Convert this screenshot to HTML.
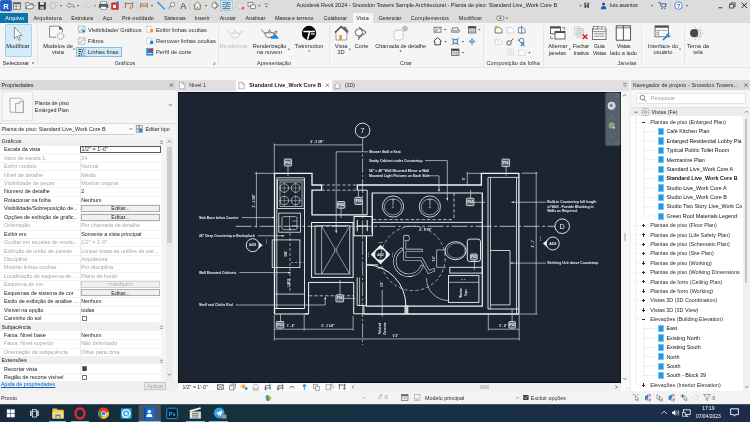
<!DOCTYPE html>
<html><head><meta charset="utf-8"><title>Autodesk Revit 2024</title>
<style>
html,body{margin:0;padding:0;}
body{width:750px;height:422px;overflow:hidden;position:relative;background:#f0f0f0;font-family:"Liberation Sans",sans-serif;}
.t{position:absolute;white-space:nowrap;}
#root{position:absolute;left:0;top:0;width:750px;height:422px;will-change:transform;}
.r{position:absolute;}
svg{position:absolute;overflow:visible;}
</style></head><body><div id="root">

<div class="r" style="left:0px;top:0px;width:750px;height:23px;background:#dcdcdc;"></div>
<div class="r" style="left:0px;top:23px;width:750px;height:45px;background:#f5f5f5;"></div>
<div class="r" style="left:0px;top:66.8px;width:750px;height:0.8px;background:#e6e6e6;"></div>
<div class="r" style="left:0px;top:67.6px;width:750px;height:12.4px;background:#f6f6f6;"></div>
<div class="t" style="left:296.5px;top:1.80px;font-size:5.5px;line-height:6.60px;color:#222;">Autodesk Revit 2024 - Snowdon Towers Sample Architectural - Planta de piso: Standard Live_Work Core B</div>
<div class="t" style="left:610px;top:1.92px;font-size:5.3px;line-height:6.36px;color:#222;">luis.asantos</div>
<div class="r" style="left:0px;top:13px;width:28px;height:10px;background:#0a75a8;"></div>
<div class="t" style="left:5.3px;top:15.16px;font-size:5.4px;line-height:6.48px;color:#fff;letter-spacing:0.056px;">Arquivo</div>
<div class="r" style="left:353.2px;top:13px;width:19.8px;height:10px;background:#f5f5f5;"></div>
<div class="t" style="left:33.6px;top:15.16px;font-size:5.4px;line-height:6.48px;color:#222;letter-spacing:0.171px;">Arquitetura</div>
<div class="t" style="left:71.3px;top:15.16px;font-size:5.4px;line-height:6.48px;color:#222;letter-spacing:-0.012px;">Estrutura</div>
<div class="t" style="left:102.7px;top:15.16px;font-size:5.4px;line-height:6.48px;color:#222;letter-spacing:0.098px;">Aço</div>
<div class="t" style="left:121.9px;top:15.16px;font-size:5.4px;line-height:6.48px;color:#222;letter-spacing:0.108px;">Pré-moldado</div>
<div class="t" style="left:163.9px;top:15.16px;font-size:5.4px;line-height:6.48px;color:#222;letter-spacing:-0.063px;">Sistemas</div>
<div class="t" style="left:194.7px;top:15.16px;font-size:5.4px;line-height:6.48px;color:#222;letter-spacing:0.042px;">Inserir</div>
<div class="t" style="left:219.7px;top:15.16px;font-size:5.4px;line-height:6.48px;color:#222;letter-spacing:0.065px;">Anotar</div>
<div class="t" style="left:245.6px;top:15.16px;font-size:5.4px;line-height:6.48px;color:#222;letter-spacing:0.024px;">Analisar</div>
<div class="t" style="left:274.9px;top:15.16px;font-size:5.4px;line-height:6.48px;color:#222;letter-spacing:-0.028px;">Massa e terreno</div>
<div class="t" style="left:323.6px;top:15.16px;font-size:5.4px;line-height:6.48px;color:#222;letter-spacing:-0.024px;">Colaborar</div>
<div class="t" style="left:356.3px;top:15.16px;font-size:5.4px;line-height:6.48px;color:#222;letter-spacing:0.118px;">Vista</div>
<div class="t" style="left:378.4px;top:15.16px;font-size:5.4px;line-height:6.48px;color:#222;letter-spacing:-0.101px;">Gerenciar</div>
<div class="t" style="left:410.8px;top:15.16px;font-size:5.4px;line-height:6.48px;color:#222;letter-spacing:0.174px;">Complementos</div>
<div class="t" style="left:458.8px;top:15.16px;font-size:5.4px;line-height:6.48px;color:#222;letter-spacing:0.177px;">Modificar</div>
<div class="r" style="left:5px;top:24px;width:27px;height:33.2px;background:#d4ebf8;border:0.6px solid #a3d5ee;box-sizing:border-box;border-radius:1px;"></div>
<div class="t" style="left:-32px;width:100px;text-align:center;top:42.55px;font-size:5.75px;line-height:6.90px;color:#222;">Modificar</div>
<div class="t" style="left:2.8px;top:59.54px;font-size:5.6px;line-height:6.72px;color:#222;">Selecionar</div>
<div class="r" style="left:37px;top:25px;width:0.6px;height:41px;background:#e6e6e6;"></div>
<div class="r" style="left:218px;top:25px;width:0.6px;height:41px;background:#e6e6e6;"></div>
<div class="r" style="left:328.8px;top:25px;width:0.6px;height:41px;background:#e6e6e6;"></div>
<div class="r" style="left:483.4px;top:25px;width:0.6px;height:41px;background:#e6e6e6;"></div>
<div class="r" style="left:542.6px;top:25px;width:0.6px;height:41px;background:#e6e6e6;"></div>
<div class="r" style="left:641.2px;top:25px;width:0.6px;height:41px;background:#e6e6e6;"></div>
<div class="r" style="left:684px;top:25px;width:0.6px;height:41px;background:#e6e6e6;"></div>
<div class="t" style="left:8px;width:100px;text-align:center;top:42.55px;font-size:5.75px;line-height:6.90px;color:#222;">Modelos de</div>
<div class="t" style="left:8px;width:100px;text-align:center;top:49.45px;font-size:5.75px;line-height:6.90px;color:#222;">vista</div>
<div class="t" style="left:88px;top:26.55px;font-size:5.75px;line-height:6.90px;color:#2c2c2c;">Visibilidade/ Gráficos</div>
<div class="t" style="left:88px;top:37.55px;font-size:5.75px;line-height:6.90px;color:#2c2c2c;">Filtros</div>
<div class="r" style="left:76px;top:47px;width:46px;height:10px;background:#d3eaf7;border:0.5px solid #7fc0e0;box-sizing:border-box;"></div>
<div class="t" style="left:88px;top:48.55px;font-size:5.75px;line-height:6.90px;color:#2c2c2c;">Linhas finas</div>
<div class="t" style="left:156px;top:26.55px;font-size:5.75px;line-height:6.90px;color:#2c2c2c;">Exibir linhas ocultas</div>
<div class="t" style="left:156px;top:37.55px;font-size:5.75px;line-height:6.90px;color:#2c2c2c;">Remover linhas ocultas</div>
<div class="t" style="left:156px;top:48.55px;font-size:5.75px;line-height:6.90px;color:#2c2c2c;">Perfil de corte</div>
<div class="t" style="left:75px;width:100px;text-align:center;top:59.60px;font-size:5.5px;line-height:6.60px;color:#333;">Gráficos</div>
<div class="t" style="left:183.5px;width:100px;text-align:center;top:42.55px;font-size:5.75px;line-height:6.90px;color:#bbb;">Renderizar</div>
<div class="t" style="left:219.5px;width:100px;text-align:center;top:42.64px;font-size:5.6px;line-height:6.72px;color:#2c2c2c;letter-spacing:-0.096px;">Renderização</div>
<div class="t" style="left:219.5px;width:100px;text-align:center;top:49.45px;font-size:5.75px;line-height:6.90px;color:#2c2c2c;">na nuvem</div>
<div class="t" style="left:259px;width:100px;text-align:center;top:42.55px;font-size:5.75px;line-height:6.90px;color:#2c2c2c;">Twinmotion</div>
<div class="t" style="left:224px;width:100px;text-align:center;top:59.60px;font-size:5.5px;line-height:6.60px;color:#333;">Apresentação</div>
<div class="t" style="left:291px;width:100px;text-align:center;top:42.55px;font-size:5.75px;line-height:6.90px;color:#2c2c2c;">Vista</div>
<div class="t" style="left:291px;width:100px;text-align:center;top:49.45px;font-size:5.75px;line-height:6.90px;color:#2c2c2c;">3D</div>
<div class="t" style="left:311.5px;width:100px;text-align:center;top:42.55px;font-size:5.75px;line-height:6.90px;color:#2c2c2c;">Corte</div>
<div class="t" style="left:350.6px;width:100px;text-align:center;top:42.64px;font-size:5.6px;line-height:6.72px;color:#2c2c2c;letter-spacing:-0.066px;">Chamada de detalhe</div>
<div class="t" style="left:356px;width:100px;text-align:center;top:59.60px;font-size:5.5px;line-height:6.60px;color:#333;">Criar</div>
<div class="t" style="left:463.20000000000005px;width:100px;text-align:center;top:59.60px;font-size:5.5px;line-height:6.60px;color:#333;letter-spacing:0.086px;">Composição da folha</div>
<div class="t" style="left:507.9px;width:100px;text-align:center;top:42.64px;font-size:5.6px;line-height:6.72px;color:#2c2c2c;letter-spacing:-0.051px;">Alternar</div>
<div class="t" style="left:507.4px;width:100px;text-align:center;top:49.54px;font-size:5.6px;line-height:6.72px;color:#2c2c2c;letter-spacing:-0.092px;">janelas</div>
<div class="t" style="left:531px;width:100px;text-align:center;top:42.70px;font-size:5.5px;line-height:6.60px;color:#2c2c2c;letter-spacing:-0.220px;">Fechar</div>
<div class="t" style="left:531.1px;width:100px;text-align:center;top:49.60px;font-size:5.5px;line-height:6.60px;color:#2c2c2c;letter-spacing:-0.172px;">Inativa</div>
<div class="t" style="left:549.2px;width:100px;text-align:center;top:42.70px;font-size:5.5px;line-height:6.60px;color:#2c2c2c;letter-spacing:-0.204px;">Guia</div>
<div class="t" style="left:549.4px;width:100px;text-align:center;top:49.60px;font-size:5.5px;line-height:6.60px;color:#2c2c2c;letter-spacing:-0.246px;">Vistas</div>
<div class="t" style="left:573.6px;width:100px;text-align:center;top:42.70px;font-size:5.5px;line-height:6.60px;color:#2c2c2c;letter-spacing:-0.213px;">Vistas</div>
<div class="t" style="left:573.4px;width:100px;text-align:center;top:49.54px;font-size:5.6px;line-height:6.72px;color:#2c2c2c;letter-spacing:-0.055px;">lado a lado</div>
<div class="t" style="left:577px;width:100px;text-align:center;top:59.60px;font-size:5.5px;line-height:6.60px;color:#333;">Janelas</div>
<div class="t" style="left:613px;width:100px;text-align:center;top:42.55px;font-size:5.75px;line-height:6.90px;color:#2c2c2c;">Interface do</div>
<div class="t" style="left:613px;width:100px;text-align:center;top:49.45px;font-size:5.75px;line-height:6.90px;color:#2c2c2c;">usuário</div>
<div class="t" style="left:648px;width:100px;text-align:center;top:42.55px;font-size:5.75px;line-height:6.90px;color:#2c2c2c;">Tema da</div>
<div class="t" style="left:648px;width:100px;text-align:center;top:49.45px;font-size:5.75px;line-height:6.90px;color:#2c2c2c;">tela</div>
<div class="r" style="left:0px;top:80px;width:175.6px;height:311px;background:#ffffff;"></div>
<div class="r" style="left:0px;top:80px;width:175.6px;height:10px;background:#d9d9d9;"></div>
<div class="t" style="left:1.5px;top:82.06px;font-size:5.4px;line-height:6.48px;color:#222;">Propriedades</div>
<div class="r" style="left:0px;top:90px;width:175.6px;height:47.6px;background:#f4f4f4;"></div>
<div class="r" style="left:1.5px;top:90.6px;width:31.2px;height:30.6px;background:#f7f7f7;border:0.5px solid #e4e4e4;box-sizing:border-box;"></div>
<div class="t" style="left:34.8px;top:99.56px;font-size:5.4px;line-height:6.48px;color:#2c2c2c;">Planta de piso</div>
<div class="t" style="left:34.8px;top:106.96px;font-size:5.4px;line-height:6.48px;color:#2c2c2c;">Enlarged Plan</div>
<div class="r" style="left:0px;top:123px;width:175.6px;height:0.5px;background:#dcdcdc;"></div>
<div class="r" style="left:0.5px;top:124.4px;width:133px;height:9.8px;background:#fbfbfb;border-bottom:0.6px solid #cfcfcf;"></div>
<div class="t" style="left:1.5px;top:126.16px;font-size:5.4px;line-height:6.48px;color:#2c2c2c;">Planta de piso: Standard Live_Work Core B</div>
<div class="t" style="left:145.4px;top:126.16px;font-size:5.4px;line-height:6.48px;color:#2c2c2c;">Editar tipo</div>
<div class="r" style="left:0px;top:137.6px;width:165px;height:8px;background:#f0f0f0;"></div>
<div class="t" style="left:1.5px;top:138.36px;font-size:5.4px;line-height:6.48px;color:#2c2c2c;">Gráficos</div>
<div class="r" style="left:0px;top:153.6px;width:160px;height:0.4px;background:#f3f3f3;"></div>
<div class="t" style="left:4px;top:146.26px;font-size:5.4px;line-height:6.48px;color:#222;">Escala da vista</div>
<div class="t" style="left:81.2px;top:146.26px;font-size:5.4px;line-height:6.48px;color:#222;">1/2&quot; = 1&#x27;-0&quot;</div>
<div class="r" style="left:0px;top:162.04px;width:160px;height:0.4px;background:#f3f3f3;"></div>
<div class="t" style="left:4px;top:154.70px;font-size:5.4px;line-height:6.48px;color:#a6a6a6;">Valor de escala   1:</div>
<div class="t" style="left:81.2px;top:154.70px;font-size:5.4px;line-height:6.48px;color:#a6a6a6;">24</div>
<div class="r" style="left:0px;top:170.48px;width:160px;height:0.4px;background:#f3f3f3;"></div>
<div class="t" style="left:4px;top:163.14px;font-size:5.4px;line-height:6.48px;color:#a6a6a6;">Exibir modelo</div>
<div class="t" style="left:81.2px;top:163.14px;font-size:5.4px;line-height:6.48px;color:#a6a6a6;">Normal</div>
<div class="r" style="left:0px;top:178.92px;width:160px;height:0.4px;background:#f3f3f3;"></div>
<div class="t" style="left:4px;top:171.58px;font-size:5.4px;line-height:6.48px;color:#a6a6a6;">Nível de detalhe</div>
<div class="t" style="left:81.2px;top:171.58px;font-size:5.4px;line-height:6.48px;color:#a6a6a6;">Médio</div>
<div class="r" style="left:0px;top:187.35999999999999px;width:160px;height:0.4px;background:#f3f3f3;"></div>
<div class="t" style="left:4px;top:180.02px;font-size:5.4px;line-height:6.48px;color:#a6a6a6;">Visibilidade de peças</div>
<div class="t" style="left:81.2px;top:180.02px;font-size:5.4px;line-height:6.48px;color:#a6a6a6;">Mostrar original</div>
<div class="r" style="left:0px;top:195.79999999999998px;width:160px;height:0.4px;background:#f3f3f3;"></div>
<div class="t" style="left:4px;top:188.46px;font-size:5.4px;line-height:6.48px;color:#222;">Número de detalhe</div>
<div class="t" style="left:81.2px;top:188.46px;font-size:5.4px;line-height:6.48px;color:#222;">2</div>
<div class="r" style="left:0px;top:204.23999999999998px;width:160px;height:0.4px;background:#f3f3f3;"></div>
<div class="t" style="left:4px;top:196.90px;font-size:5.4px;line-height:6.48px;color:#222;">Rotacionar na folha</div>
<div class="t" style="left:81.2px;top:196.90px;font-size:5.4px;line-height:6.48px;color:#222;">Nenhum</div>
<div class="r" style="left:0px;top:212.67999999999998px;width:160px;height:0.4px;background:#f3f3f3;"></div>
<div class="t" style="left:4px;top:205.34px;font-size:5.4px;line-height:6.48px;color:#222;">Visibilidade/Sobreposição de...</div>
<div class="r" style="left:81px;top:205.07999999999998px;width:79px;height:7.0px;background:#f0f0f0;border:0.5px solid #adadad;box-sizing:border-box;"></div>
<div class="t" style="left:70.5px;width:100px;text-align:center;top:205.34px;font-size:5.4px;line-height:6.48px;color:#222;">Editar...</div>
<div class="r" style="left:0px;top:221.11999999999998px;width:160px;height:0.4px;background:#f3f3f3;"></div>
<div class="t" style="left:4px;top:213.78px;font-size:5.4px;line-height:6.48px;color:#222;">Opções de exibição de gráfic...</div>
<div class="r" style="left:81px;top:213.51999999999998px;width:79px;height:7.0px;background:#f0f0f0;border:0.5px solid #adadad;box-sizing:border-box;"></div>
<div class="t" style="left:70.5px;width:100px;text-align:center;top:213.78px;font-size:5.4px;line-height:6.48px;color:#222;">Editar...</div>
<div class="r" style="left:0px;top:229.55999999999997px;width:160px;height:0.4px;background:#f3f3f3;"></div>
<div class="t" style="left:4px;top:222.22px;font-size:5.4px;line-height:6.48px;color:#a6a6a6;">Orientação</div>
<div class="t" style="left:81.2px;top:222.22px;font-size:5.4px;line-height:6.48px;color:#a6a6a6;">Por chamada de detalhe</div>
<div class="r" style="left:0px;top:237.99999999999997px;width:160px;height:0.4px;background:#f3f3f3;"></div>
<div class="t" style="left:4px;top:230.66px;font-size:5.4px;line-height:6.48px;color:#222;">Exibir em</div>
<div class="t" style="left:81.2px;top:230.66px;font-size:5.4px;line-height:6.48px;color:#222;">Somente a vista principal</div>
<div class="r" style="left:0px;top:246.43999999999997px;width:160px;height:0.4px;background:#f3f3f3;"></div>
<div class="t" style="left:4px;top:239.10px;font-size:5.4px;line-height:6.48px;color:#a6a6a6;">Ocultar em escalas de resolu...</div>
<div class="t" style="left:81.2px;top:239.10px;font-size:5.4px;line-height:6.48px;color:#a6a6a6;">1/2&quot; = 1&#x27;-0&quot;</div>
<div class="r" style="left:0px;top:254.88px;width:160px;height:0.4px;background:#f3f3f3;"></div>
<div class="t" style="left:4px;top:247.54px;font-size:5.4px;line-height:6.48px;color:#a6a6a6;">Exibição de união de parede</div>
<div class="t" style="left:81.2px;top:247.54px;font-size:5.4px;line-height:6.48px;color:#a6a6a6;">Limpar todas as uniões de par...</div>
<div class="r" style="left:0px;top:263.32000000000005px;width:160px;height:0.4px;background:#f3f3f3;"></div>
<div class="t" style="left:4px;top:255.98px;font-size:5.4px;line-height:6.48px;color:#a6a6a6;">Disciplina</div>
<div class="t" style="left:81.2px;top:255.98px;font-size:5.4px;line-height:6.48px;color:#a6a6a6;">Arquitetura</div>
<div class="r" style="left:0px;top:271.76px;width:160px;height:0.4px;background:#f3f3f3;"></div>
<div class="t" style="left:4px;top:264.42px;font-size:5.4px;line-height:6.48px;color:#a6a6a6;">Mostrar linhas ocultas</div>
<div class="t" style="left:81.2px;top:264.42px;font-size:5.4px;line-height:6.48px;color:#a6a6a6;">Por disciplina</div>
<div class="r" style="left:0px;top:280.20000000000005px;width:160px;height:0.4px;background:#f3f3f3;"></div>
<div class="t" style="left:4px;top:272.86px;font-size:5.4px;line-height:6.48px;color:#a6a6a6;">Localização do esquema de ...</div>
<div class="t" style="left:81.2px;top:272.86px;font-size:5.4px;line-height:6.48px;color:#a6a6a6;">Plano de fundo</div>
<div class="r" style="left:0px;top:288.64px;width:160px;height:0.4px;background:#f3f3f3;"></div>
<div class="t" style="left:4px;top:281.30px;font-size:5.4px;line-height:6.48px;color:#a6a6a6;">Esquema de cor</div>
<div class="r" style="left:81px;top:281.03999999999996px;width:79px;height:7.0px;background:#f0f0f0;border:0.5px solid #d0d0d0;box-sizing:border-box;"></div>
<div class="t" style="left:70.5px;width:100px;text-align:center;top:281.30px;font-size:5.4px;line-height:6.48px;color:#a6a6a6;">&lt;nenhum&gt;</div>
<div class="r" style="left:0px;top:297.08000000000004px;width:160px;height:0.4px;background:#f3f3f3;"></div>
<div class="t" style="left:4px;top:289.74px;font-size:5.4px;line-height:6.48px;color:#222;">Esquemas de sistema de cor</div>
<div class="r" style="left:81px;top:289.48px;width:79px;height:7.0px;background:#f0f0f0;border:0.5px solid #adadad;box-sizing:border-box;"></div>
<div class="t" style="left:70.5px;width:100px;text-align:center;top:289.74px;font-size:5.4px;line-height:6.48px;color:#222;">Editar...</div>
<div class="r" style="left:0px;top:305.52px;width:160px;height:0.4px;background:#f3f3f3;"></div>
<div class="t" style="left:4px;top:298.18px;font-size:5.4px;line-height:6.48px;color:#222;">Estilo de exibição de análise ...</div>
<div class="t" style="left:81.2px;top:298.18px;font-size:5.4px;line-height:6.48px;color:#222;">Nenhum</div>
<div class="r" style="left:0px;top:313.96000000000004px;width:160px;height:0.4px;background:#f3f3f3;"></div>
<div class="t" style="left:4px;top:306.62px;font-size:5.4px;line-height:6.48px;color:#222;">Visível na opção</div>
<div class="t" style="left:81.2px;top:306.62px;font-size:5.4px;line-height:6.48px;color:#222;">todas</div>
<div class="r" style="left:0px;top:322.4px;width:160px;height:0.4px;background:#f3f3f3;"></div>
<div class="t" style="left:4px;top:315.06px;font-size:5.4px;line-height:6.48px;color:#222;">Caminho do sol</div>
<div class="r" style="left:82px;top:315.79999999999995px;width:4.8px;height:4.8px;background:#fff;border:0.5px solid #777;box-sizing:border-box;"></div>
<div class="r" style="left:0px;top:322.54px;width:165px;height:8.2px;background:#f0f0f0;"></div>
<div class="t" style="left:1.5px;top:323.50px;font-size:5.4px;line-height:6.48px;color:#222;">Subjacência</div>
<div class="r" style="left:0px;top:339.28px;width:160px;height:0.4px;background:#f3f3f3;"></div>
<div class="t" style="left:4px;top:331.94px;font-size:5.4px;line-height:6.48px;color:#222;">Faixa: Nível base</div>
<div class="t" style="left:81.2px;top:331.94px;font-size:5.4px;line-height:6.48px;color:#222;">Nenhum</div>
<div class="r" style="left:0px;top:347.72px;width:160px;height:0.4px;background:#f3f3f3;"></div>
<div class="t" style="left:4px;top:340.38px;font-size:5.4px;line-height:6.48px;color:#a6a6a6;">Faixa: Nível superior</div>
<div class="t" style="left:81.2px;top:340.38px;font-size:5.4px;line-height:6.48px;color:#a6a6a6;">Não delimitado</div>
<div class="r" style="left:0px;top:356.16px;width:160px;height:0.4px;background:#f3f3f3;"></div>
<div class="t" style="left:4px;top:348.82px;font-size:5.4px;line-height:6.48px;color:#a6a6a6;">Orientação da subjacência</div>
<div class="t" style="left:81.2px;top:348.82px;font-size:5.4px;line-height:6.48px;color:#a6a6a6;">Olhar para cima</div>
<div class="r" style="left:0px;top:356.3px;width:165px;height:8.2px;background:#f0f0f0;"></div>
<div class="t" style="left:1.5px;top:357.26px;font-size:5.4px;line-height:6.48px;color:#222;">Extensões</div>
<div class="r" style="left:0px;top:373.04px;width:160px;height:0.4px;background:#f3f3f3;"></div>
<div class="t" style="left:4px;top:365.70px;font-size:5.4px;line-height:6.48px;color:#222;">Recortar vista</div>
<div class="r" style="left:82px;top:366.44px;width:4.8px;height:4.8px;background:#fff;border:0.5px solid #777;box-sizing:border-box;"></div>
<div class="r" style="left:82.6px;top:367.04px;width:3.6px;height:3.6px;background:#444;"></div>
<div class="r" style="left:0px;top:381.48px;width:160px;height:0.4px;background:#f3f3f3;"></div>
<div class="t" style="left:4px;top:374.14px;font-size:5.4px;line-height:6.48px;color:#222;">Região de recorte visível</div>
<div class="r" style="left:82px;top:374.88px;width:4.8px;height:4.8px;background:#fff;border:0.5px solid #777;box-sizing:border-box;"></div>
<div class="r" style="left:79.8px;top:146px;width:0.4px;height:236px;background:#ebebeb;"></div>
<div class="r" style="left:80.4px;top:145.8px;width:80.4px;height:7.6px;background:#fff;border:0.6px solid #5a5a5a;box-sizing:border-box;"></div>
<div class="t" style="left:81.6px;top:146.26px;font-size:5.4px;line-height:6.48px;color:#222;">1/2&quot; = 1&#x27;-0&quot;</div>
<div class="r" style="left:160.6px;top:137.6px;width:15px;height:244px;background:#f4f4f4;"></div>
<div class="r" style="left:166.2px;top:137.6px;width:6.4px;height:244px;background:#ececec;"></div>
<div class="r" style="left:167px;top:146.6px;width:4.8px;height:96px;background:#cdcdcd;"></div>
<div class="r" style="left:0px;top:381.4px;width:175.6px;height:9.2px;background:#f0f0f0;"></div>
<div class="t" style="left:1px;top:381.16px;font-size:5.4px;line-height:6.48px;color:#0563c1;text-decoration:underline;">Ajuda de propriedades</div>
<div class="r" style="left:144.4px;top:381.6px;width:22px;height:8.4px;background:#e9e9e9;border:0.5px solid #c8c8c8;box-sizing:border-box;"></div>
<div class="t" style="left:105.4px;width:100px;text-align:center;top:382.56px;font-size:5.4px;line-height:6.48px;color:#a8a8a8;">Aplicar</div>
<div class="r" style="left:175.6px;top:91.5px;width:2px;height:299.5px;background:#f0f0f0;"></div>
<div class="r" style="left:175.6px;top:79.8px;width:453.4px;height:11.7px;background:#e0e0e0;"></div>
<div class="r" style="left:236.2px;top:80px;width:95.8px;height:11.5px;background:#ffffff;"></div>
<div class="t" style="left:189.2px;top:82.16px;font-size:5.4px;line-height:6.48px;color:#2c2c2c;">Nível 1</div>
<div class="t" style="left:249.2px;top:82.22px;font-size:5.3px;line-height:6.36px;color:#111;font-weight:bold;letter-spacing:0.092px;">Standard Live_Work Core B</div>
<div class="t" style="left:344.7px;top:82.16px;font-size:5.4px;line-height:6.48px;color:#2c2c2c;">(3D)</div>
<div class="r" style="left:177.5px;top:91.5px;width:443.2px;height:291px;background:#1b2430;border:0.6px solid #0b0f15;box-sizing:border-box;"></div>
<div class="r" style="left:620.7px;top:91.5px;width:9.6px;height:291.5px;background:#f7f7f7;"></div>
<div class="r" style="left:623.7px;top:233px;width:2.4px;height:8.4px;background:#cfcfcf;"></div>
<div class="r" style="left:177.5px;top:382.5px;width:451.5px;height:8.5px;background:#fbfbfb;"></div>
<div class="r" style="left:350px;top:383px;width:270.7px;height:8px;background:#f0f0f0;"></div>
<div class="r" style="left:480px;top:384.6px;width:9px;height:4.6px;background:#cdcdcd;"></div>
<div class="t" style="left:182.4px;top:383.88px;font-size:5.2px;line-height:6.24px;color:#2c2c2c;">1/2&quot; = 1&#x27;-0&quot;</div>
<div class="r" style="left:629px;top:91.5px;width:2.4px;height:299.5px;background:#f0f0f0;"></div>
<div class="r" style="left:631.4px;top:80px;width:118.6px;height:310.6px;background:#ffffff;"></div>
<div class="r" style="left:631.4px;top:80px;width:118.6px;height:9.6px;background:#d9d9d9;"></div>
<div class="t" style="left:632.7px;top:82.06px;font-size:5.4px;line-height:6.48px;color:#2c2c2c;letter-spacing:0.091px;">Navegador de projeto - Snowdon Towers...</div>
<div class="r" style="left:631.4px;top:89.6px;width:118.6px;height:17.8px;background:#f6f6f6;"></div>
<div class="r" style="left:635.5px;top:92.6px;width:110.5px;height:11.6px;background:#ffffff;border:0.5px solid #e4e4e4;box-sizing:border-box;border-radius:1.5px;"></div>
<div class="t" style="left:651px;top:95.36px;font-size:5.4px;line-height:6.48px;color:#a0a0a0;">Pesquisar</div>
<div class="r" style="left:631.4px;top:107.2px;width:118.6px;height:0.5px;background:#e2e2e2;"></div>
<div class="r" style="left:631.4px;top:108.4px;width:111.2px;height:8px;background:#ececec;"></div>
<div class="t" style="left:651.6px;top:109.06px;font-size:5.4px;line-height:6.48px;color:#2c2c2c;">Vistas (Fe)</div>
<div class="r" style="left:631.4px;top:108px;width:111.2px;height:282.6px;overflow:hidden;">
<div class="t" style="left:18.899999999999977px;top:11.06px;font-size:5.4px;line-height:6.48px;color:#2c2c2c;">Plantas de piso (Enlarged Plan)</div>
<div class="r" style="left:10.700000000000045px;top:13.899999999999997px;width:3.4px;height:0.8px;background:#2a2a2a;"></div>
<div class="r" style="left:26.200000000000045px;top:20.080000000000005px;width:6.8px;height:7.2px;background:#1c9ae6;border:0.7px solid #7cc4f0;box-sizing:border-box;"></div>
<div class="t" style="left:35.0px;top:20.44px;font-size:5.4px;line-height:6.48px;color:#111;">Café Kitchen Plan</div>
<div class="r" style="left:26.200000000000045px;top:29.46px;width:6.8px;height:7.2px;background:#1c9ae6;border:0.7px solid #7cc4f0;box-sizing:border-box;"></div>
<div class="t" style="left:35.0px;top:29.82px;font-size:5.4px;line-height:6.48px;color:#111;">Enlarged Residential Lobby Pla</div>
<div class="r" style="left:26.200000000000045px;top:38.839999999999996px;width:6.8px;height:7.2px;background:#1c9ae6;border:0.7px solid #7cc4f0;box-sizing:border-box;"></div>
<div class="t" style="left:35.0px;top:39.20px;font-size:5.4px;line-height:6.48px;color:#111;">Typical Public Toilet Room</div>
<div class="r" style="left:26.200000000000045px;top:48.21999999999999px;width:6.8px;height:7.2px;background:#1c9ae6;border:0.7px solid #7cc4f0;box-sizing:border-box;"></div>
<div class="t" style="left:35.0px;top:48.58px;font-size:5.4px;line-height:6.48px;color:#111;">Mezzanine Plan</div>
<div class="r" style="left:26.200000000000045px;top:57.59999999999999px;width:6.8px;height:7.2px;background:#1c9ae6;border:0.7px solid #7cc4f0;box-sizing:border-box;"></div>
<div class="t" style="left:35.0px;top:57.96px;font-size:5.4px;line-height:6.48px;color:#111;">Standard Live_Work Core A</div>
<div class="r" style="left:26.200000000000045px;top:66.97999999999999px;width:6.8px;height:7.2px;background:#1c9ae6;border:0.7px solid #7cc4f0;box-sizing:border-box;"></div>
<div class="t" style="left:35.0px;top:67.34px;font-size:5.4px;line-height:6.48px;color:#111;font-weight:bold;">Standard Live_Work Core B</div>
<div class="r" style="left:26.200000000000045px;top:76.36000000000001px;width:6.8px;height:7.2px;background:#1c9ae6;border:0.7px solid #7cc4f0;box-sizing:border-box;"></div>
<div class="t" style="left:35.0px;top:76.72px;font-size:5.4px;line-height:6.48px;color:#111;">Studio Live_Work Core A</div>
<div class="r" style="left:26.200000000000045px;top:85.74000000000001px;width:6.8px;height:7.2px;background:#1c9ae6;border:0.7px solid #7cc4f0;box-sizing:border-box;"></div>
<div class="t" style="left:35.0px;top:86.10px;font-size:5.4px;line-height:6.48px;color:#111;">Studio Live_Work Core B</div>
<div class="r" style="left:26.200000000000045px;top:95.12px;width:6.8px;height:7.2px;background:#1c9ae6;border:0.7px solid #7cc4f0;box-sizing:border-box;"></div>
<div class="t" style="left:35.0px;top:95.48px;font-size:5.4px;line-height:6.48px;color:#111;">Studio Two Story Live_Work Co</div>
<div class="r" style="left:26.200000000000045px;top:104.50000000000003px;width:6.8px;height:7.2px;background:#1c9ae6;border:0.7px solid #7cc4f0;box-sizing:border-box;"></div>
<div class="t" style="left:35.0px;top:104.86px;font-size:5.4px;line-height:6.48px;color:#111;">Green Roof Materials Legend</div>
<div class="t" style="left:18.899999999999977px;top:114.24px;font-size:5.4px;line-height:6.48px;color:#2c2c2c;">Plantas de piso (Floor Plan)</div>
<div class="r" style="left:10.700000000000045px;top:117.08000000000001px;width:3.4px;height:0.8px;background:#2a2a2a;"></div>
<div class="r" style="left:12.0px;top:115.78000000000002px;width:0.8px;height:3.4px;background:#2a2a2a;"></div>
<div class="t" style="left:18.899999999999977px;top:123.62px;font-size:5.4px;line-height:6.48px;color:#2c2c2c;">Plantas de piso (Life Safety Plan)</div>
<div class="r" style="left:10.700000000000045px;top:126.46000000000001px;width:3.4px;height:0.8px;background:#2a2a2a;"></div>
<div class="r" style="left:12.0px;top:125.16000000000001px;width:0.8px;height:3.4px;background:#2a2a2a;"></div>
<div class="t" style="left:18.899999999999977px;top:133.00px;font-size:5.4px;line-height:6.48px;color:#2c2c2c;">Plantas de piso (Schematic Plan)</div>
<div class="r" style="left:10.700000000000045px;top:135.84px;width:3.4px;height:0.8px;background:#2a2a2a;"></div>
<div class="r" style="left:12.0px;top:134.54000000000002px;width:0.8px;height:3.4px;background:#2a2a2a;"></div>
<div class="t" style="left:18.899999999999977px;top:142.38px;font-size:5.4px;line-height:6.48px;color:#2c2c2c;">Plantas de piso (Site Plan)</div>
<div class="r" style="left:10.700000000000045px;top:145.22px;width:3.4px;height:0.8px;background:#2a2a2a;"></div>
<div class="r" style="left:12.0px;top:143.92000000000002px;width:0.8px;height:3.4px;background:#2a2a2a;"></div>
<div class="t" style="left:18.899999999999977px;top:151.76px;font-size:5.4px;line-height:6.48px;color:#2c2c2c;">Plantas de piso (Working)</div>
<div class="r" style="left:10.700000000000045px;top:154.6px;width:3.4px;height:0.8px;background:#2a2a2a;"></div>
<div class="r" style="left:12.0px;top:153.3px;width:0.8px;height:3.4px;background:#2a2a2a;"></div>
<div class="t" style="left:18.899999999999977px;top:161.14px;font-size:5.4px;line-height:6.48px;color:#2c2c2c;">Plantas de piso (Working Dimensions</div>
<div class="r" style="left:10.700000000000045px;top:163.98px;width:3.4px;height:0.8px;background:#2a2a2a;"></div>
<div class="r" style="left:12.0px;top:162.68px;width:0.8px;height:3.4px;background:#2a2a2a;"></div>
<div class="t" style="left:18.899999999999977px;top:170.52px;font-size:5.4px;line-height:6.48px;color:#2c2c2c;">Plantas de forro (Ceiling Plan)</div>
<div class="r" style="left:10.700000000000045px;top:173.35999999999999px;width:3.4px;height:0.8px;background:#2a2a2a;"></div>
<div class="r" style="left:12.0px;top:172.06px;width:0.8px;height:3.4px;background:#2a2a2a;"></div>
<div class="t" style="left:18.899999999999977px;top:179.90px;font-size:5.4px;line-height:6.48px;color:#2c2c2c;">Plantas de forro (Working)</div>
<div class="r" style="left:10.700000000000045px;top:182.73999999999998px;width:3.4px;height:0.8px;background:#2a2a2a;"></div>
<div class="r" style="left:12.0px;top:181.44px;width:0.8px;height:3.4px;background:#2a2a2a;"></div>
<div class="t" style="left:18.899999999999977px;top:189.28px;font-size:5.4px;line-height:6.48px;color:#2c2c2c;">Vistas 3D (3D Coordination)</div>
<div class="r" style="left:10.700000000000045px;top:192.12000000000003px;width:3.4px;height:0.8px;background:#2a2a2a;"></div>
<div class="r" style="left:12.0px;top:190.82000000000005px;width:0.8px;height:3.4px;background:#2a2a2a;"></div>
<div class="t" style="left:18.899999999999977px;top:198.66px;font-size:5.4px;line-height:6.48px;color:#2c2c2c;">Vistas 3D (3D View)</div>
<div class="r" style="left:10.700000000000045px;top:201.50000000000003px;width:3.4px;height:0.8px;background:#2a2a2a;"></div>
<div class="r" style="left:12.0px;top:200.20000000000005px;width:0.8px;height:3.4px;background:#2a2a2a;"></div>
<div class="t" style="left:18.899999999999977px;top:208.04px;font-size:5.4px;line-height:6.48px;color:#2c2c2c;">Elevações (Building Elevation)</div>
<div class="r" style="left:10.700000000000045px;top:210.88000000000002px;width:3.4px;height:0.8px;background:#2a2a2a;"></div>
<div class="r" style="left:26.200000000000045px;top:217.06000000000003px;width:6.8px;height:7.2px;background:#1c9ae6;border:0.7px solid #7cc4f0;box-sizing:border-box;"></div>
<div class="t" style="left:35.0px;top:217.42px;font-size:5.4px;line-height:6.48px;color:#111;">East</div>
<div class="r" style="left:26.200000000000045px;top:226.44000000000003px;width:6.8px;height:7.2px;background:#1c9ae6;border:0.7px solid #7cc4f0;box-sizing:border-box;"></div>
<div class="t" style="left:35.0px;top:226.80px;font-size:5.4px;line-height:6.48px;color:#111;">Existing North</div>
<div class="r" style="left:26.200000000000045px;top:235.82000000000002px;width:6.8px;height:7.2px;background:#1c9ae6;border:0.7px solid #7cc4f0;box-sizing:border-box;"></div>
<div class="t" style="left:35.0px;top:236.18px;font-size:5.4px;line-height:6.48px;color:#111;">Existing South</div>
<div class="r" style="left:26.200000000000045px;top:245.20000000000002px;width:6.8px;height:7.2px;background:#1c9ae6;border:0.7px solid #7cc4f0;box-sizing:border-box;"></div>
<div class="t" style="left:35.0px;top:245.56px;font-size:5.4px;line-height:6.48px;color:#111;">North</div>
<div class="r" style="left:26.200000000000045px;top:254.58px;width:6.8px;height:7.2px;background:#1c9ae6;border:0.7px solid #7cc4f0;box-sizing:border-box;"></div>
<div class="t" style="left:35.0px;top:254.94px;font-size:5.4px;line-height:6.48px;color:#111;">South</div>
<div class="r" style="left:26.200000000000045px;top:263.96px;width:6.8px;height:7.2px;background:#1c9ae6;border:0.7px solid #7cc4f0;box-sizing:border-box;"></div>
<div class="t" style="left:35.0px;top:264.32px;font-size:5.4px;line-height:6.48px;color:#111;">South - Block 39</div>
<div class="t" style="left:18.899999999999977px;top:273.70px;font-size:5.4px;line-height:6.48px;color:#2c2c2c;">Elevações (Interior Elevation)</div>
<div class="r" style="left:10.700000000000045px;top:276.5400000000001px;width:3.4px;height:0.8px;background:#2a2a2a;"></div>
<div class="r" style="left:12.0px;top:275.24000000000007px;width:0.8px;height:3.4px;background:#2a2a2a;"></div>
</div>
<div class="r" style="left:742.6px;top:108px;width:7.4px;height:282.6px;background:#f0f0f0;"></div>
<div class="r" style="left:744.8px;top:119.4px;width:2.4px;height:164px;background:#c4c4c4;"></div>
<div class="r" style="left:0px;top:390.8px;width:750px;height:13.6px;background:#f3f3f3;"></div>
<div class="t" style="left:1px;top:394.56px;font-size:5.4px;line-height:6.48px;color:#2c2c2c;">Pronto</div>
<div class="t" style="left:425px;top:394.56px;font-size:5.4px;line-height:6.48px;color:#2c2c2c;">Modelo principal</div>
<div class="t" style="left:530.8px;top:394.56px;font-size:5.4px;line-height:6.48px;color:#2c2c2c;">Excluir opções</div>
<div class="t" style="left:658.4px;width:100px;text-align:center;top:405.30px;font-size:5.0px;line-height:6.00px;color:#fff;z-index:5;">17:19</div>
<div class="t" style="left:658.4px;width:100px;text-align:center;top:413.40px;font-size:5.0px;line-height:6.00px;color:#fff;z-index:5;">07/04/2023</div>
<svg width="750" height="422" viewBox="0 0 750 422" style="left:0;top:0;font-family:'Liberation Sans',sans-serif">
<line x1="274.3" y1="144.9" x2="362.6" y2="144.9" stroke="#d5dae0" stroke-width="0.7"/>
<line x1="274.3" y1="143.5" x2="274.3" y2="173" stroke="#d5dae0" stroke-width="0.7"/>
<text x="317" y="142.6" font-size="3.0" text-anchor="middle" fill="#eef0f3" font-weight="bold">6' - 5 3/8"</text>
<circle cx="362.6" cy="130.4" r="7.3" fill="none" stroke="#f4f6f8" stroke-width="0.9"/>
<text x="362.6" y="133.0" font-size="7.2" text-anchor="middle" fill="#eef0f3">7</text>
<line x1="362.6" y1="138" x2="362.6" y2="345" stroke="#d5dae0" stroke-width="0.7" stroke-dasharray="14 2.2 2.2 2.2"/>
<line x1="256.4" y1="172" x2="256.4" y2="227.5" stroke="#d5dae0" stroke-width="0.7"/>
<line x1="254.8" y1="173.3" x2="274" y2="173.3" stroke="#d5dae0" stroke-width="0.7"/>
<text x="254.6" y="200.7" font-size="3.0" text-anchor="middle" fill="#eef0f3" font-weight="bold" transform="rotate(-90 254.6 200.7)">2' - 4 3/8"</text>
<line x1="235.6" y1="226.3" x2="554.7" y2="226.3" stroke="#d5dae0" stroke-width="0.8" stroke-dasharray="16 2.5 3 2.5"/>
<circle cx="562.2" cy="226.2" r="7.3" fill="none" stroke="#f4f6f8" stroke-width="0.9"/>
<text x="562.2" y="228.9" font-size="7.2" text-anchor="middle" fill="#eef0f3">D</text>
<line x1="274.3" y1="329.2" x2="353.1" y2="329.2" stroke="#d5dae0" stroke-width="0.7"/>
<line x1="274.3" y1="338.9" x2="519.2" y2="338.9" stroke="#d5dae0" stroke-width="0.7"/>
<line x1="274.3" y1="315" x2="274.3" y2="340.5" stroke="#d5dae0" stroke-width="0.7"/>
<line x1="304.2" y1="315" x2="304.2" y2="330.5" stroke="#d5dae0" stroke-width="0.7"/>
<line x1="353.1" y1="316" x2="353.1" y2="330.5" stroke="#d5dae0" stroke-width="0.7"/>
<text x="327.8" y="327.2" font-size="3.0" text-anchor="middle" fill="#eef0f3" font-weight="bold">3' - 1 1/4"</text>
<text x="287" y="327.2" font-size="2.8" text-anchor="start" fill="#eef0f3" font-weight="bold">1' - 4"</text>
<line x1="488.3" y1="329.2" x2="519.2" y2="329.2" stroke="#d5dae0" stroke-width="0.7"/>
<line x1="488.3" y1="315" x2="488.3" y2="330.5" stroke="#d5dae0" stroke-width="0.7"/>
<line x1="519.2" y1="315" x2="519.2" y2="340.5" stroke="#d5dae0" stroke-width="0.7"/>
<text x="503" y="327.2" font-size="2.8" text-anchor="middle" fill="#eef0f3" font-weight="bold">5' - 4"</text>
<line x1="521.6" y1="173.2" x2="537.5" y2="173.2" stroke="#d5dae0" stroke-width="0.7"/>
<line x1="536.2" y1="172" x2="536.2" y2="314" stroke="#d5dae0" stroke-width="0.7"/>
<line x1="520" y1="314" x2="537.5" y2="314" stroke="#d5dae0" stroke-width="0.7"/>
<text x="534.4" y="243.5" font-size="2.8" text-anchor="middle" fill="#eef0f3" font-weight="bold" transform="rotate(-90 534.4 243.5)">4' - 1"</text>
<line x1="467.3" y1="173.3" x2="481" y2="173.3" stroke="#d5dae0" stroke-width="0.7"/>
<line x1="467.3" y1="172" x2="467.3" y2="184.6" stroke="#d5dae0" stroke-width="0.7"/>
<text x="465.5" y="178.6" font-size="2.8" text-anchor="middle" fill="#eef0f3" font-weight="bold" transform="rotate(-90 465.5 178.6)">6"</text>
<path d="M274.5,314 V173.3 H312 V185 H321.6 V190.2 H312 V214.8 H367.2" fill="none" stroke="#f2f4f6" stroke-width="1.3"/>
<path d="M276.8,308.5 V177.8 H304.5" fill="none" stroke="#f2f4f6" stroke-width="0.8"/>
<line x1="304.5" y1="177.8" x2="304.5" y2="308.5" stroke="#f2f4f6" stroke-width="0.9"/>
<line x1="274.5" y1="308.5" x2="304.5" y2="308.5" stroke="#f2f4f6" stroke-width="1.0"/>
<path d="M274.5,314 H308.6" fill="none" stroke="#f2f4f6" stroke-width="1.1"/>
<line x1="321.6" y1="185" x2="357.3" y2="185" stroke="#d5dae0" stroke-width="0.8" stroke-dasharray="3.2 2"/>
<line x1="321.6" y1="190.2" x2="357.3" y2="190.2" stroke="#d5dae0" stroke-width="0.8" stroke-dasharray="3.2 2"/>
<rect x="277.6" y="180" width="26.60" height="28.50" rx="0" fill="none" stroke="#f2f4f6" stroke-width="0.8"/>
<rect x="280" y="182" width="22.00" height="24.40" rx="0" fill="none" stroke="#d5dae0" stroke-width="0.7"/>
<circle cx="284.3" cy="188" r="4.3" fill="none" stroke="#d5dae0" stroke-width="0.7"/>
<line x1="278.90000000000003" y1="188" x2="289.7" y2="188" stroke="#d5dae0" stroke-width="0.45"/>
<line x1="284.3" y1="182.6" x2="284.3" y2="193.4" stroke="#d5dae0" stroke-width="0.45"/>
<circle cx="284.3" cy="200.6" r="4.3" fill="none" stroke="#d5dae0" stroke-width="0.7"/>
<line x1="278.90000000000003" y1="200.6" x2="289.7" y2="200.6" stroke="#d5dae0" stroke-width="0.45"/>
<line x1="284.3" y1="195.2" x2="284.3" y2="206.0" stroke="#d5dae0" stroke-width="0.45"/>
<circle cx="295.6" cy="188" r="4.3" fill="none" stroke="#d5dae0" stroke-width="0.7"/>
<line x1="290.20000000000005" y1="188" x2="301.0" y2="188" stroke="#d5dae0" stroke-width="0.45"/>
<line x1="295.6" y1="182.6" x2="295.6" y2="193.4" stroke="#d5dae0" stroke-width="0.45"/>
<circle cx="295.6" cy="200.6" r="4.3" fill="none" stroke="#d5dae0" stroke-width="0.7"/>
<line x1="290.20000000000005" y1="200.6" x2="301.0" y2="200.6" stroke="#d5dae0" stroke-width="0.45"/>
<line x1="295.6" y1="195.2" x2="295.6" y2="206.0" stroke="#d5dae0" stroke-width="0.45"/>
<rect x="278.8" y="213.1" width="21.60" height="19.10" rx="0" fill="none" stroke="#f2f4f6" stroke-width="0.8"/>
<rect x="282" y="216.6" width="15.00" height="13.00" rx="1.6" fill="none" stroke="#d5dae0" stroke-width="0.7"/>
<line x1="289.5" y1="216.6" x2="289.5" y2="229.6" stroke="#d5dae0" stroke-width="0.5"/>
<line x1="292" y1="221" x2="297" y2="221" stroke="#d5dae0" stroke-width="0.5"/>
<line x1="292" y1="225.5" x2="297" y2="225.5" stroke="#d5dae0" stroke-width="0.5"/>
<rect x="272.2" y="239.9" width="27.70" height="27.70" rx="0" fill="none" stroke="#f2f4f6" stroke-width="0.8"/>
<text x="286.8" y="254" font-size="3.0" text-anchor="middle" fill="#eef0f3" font-weight="bold" transform="rotate(-90 286.8 254)">DW</text>
<line x1="290" y1="228" x2="290" y2="292" stroke="#d5dae0" stroke-width="0.7" stroke-dasharray="3 2"/>
<line x1="291" y1="262.5" x2="303.5" y2="262.5" stroke="#d5dae0" stroke-width="0.6" stroke-dasharray="2.4 1.6"/>
<line x1="275.5" y1="294.1" x2="304.5" y2="294.1" stroke="#f2f4f6" stroke-width="0.8"/>
<text x="290.3" y="283" font-size="2.8" text-anchor="middle" fill="#eef0f3" font-weight="bold" transform="rotate(-90 290.3 283)">J-BOX</text>
<rect x="284.3" y="159" width="7.30" height="7.10" rx="0.8" fill="#59616d" stroke="#eef0f3" stroke-width="0.8"/>
<text x="287.95000000000005" y="163.65" font-size="3.1" text-anchor="middle" fill="#ffffff" font-weight="bold">P02</text>
<line x1="288" y1="166.1" x2="288" y2="176" stroke="#d5dae0" stroke-width="0.7"/>
<rect x="276.3" y="321.5" width="7.50" height="6.60" rx="0.8" fill="#59616d" stroke="#eef0f3" stroke-width="0.8"/>
<text x="280.05" y="325.90000000000003" font-size="3.1" text-anchor="middle" fill="#ffffff" font-weight="bold">P02</text>
<line x1="280.5" y1="314" x2="280.5" y2="321.5" stroke="#d5dae0" stroke-width="0.7"/>
<text x="199" y="218.8" font-size="3.45" text-anchor="start" fill="#eef0f3" font-weight="bold" textLength="39.5" lengthAdjust="spacingAndGlyphs">Sink Base below Counter</text>
<line x1="241.8" y1="217.6" x2="273" y2="217.6" stroke="#d5dae0" stroke-width="0.7"/>
<polygon points="275.8,217.6 272.8,216.7 272.8,218.5" fill="#fff"/>
<text x="199" y="237.0" font-size="3.45" text-anchor="start" fill="#eef0f3" font-weight="bold" textLength="55.7" lengthAdjust="spacingAndGlyphs">24" Deep Countertop w Backsplash</text>
<line x1="257.7" y1="235.8" x2="282" y2="235.8" stroke="#d5dae0" stroke-width="0.7"/>
<polygon points="284.8,235.8 281.8,234.9 281.8,236.70000000000002" fill="#fff"/>
<text x="199" y="273.8" font-size="3.45" text-anchor="start" fill="#eef0f3" font-weight="bold" textLength="37.5" lengthAdjust="spacingAndGlyphs">Wall Mounted Cabinets</text>
<line x1="239.3" y1="272.6" x2="288.5" y2="272.6" stroke="#d5dae0" stroke-width="0.7"/>
<polygon points="291.2,272.6 288.2,271.70000000000005 288.2,273.5" fill="#fff"/>
<text x="199" y="306.4" font-size="3.45" text-anchor="start" fill="#eef0f3" font-weight="bold" textLength="33.8" lengthAdjust="spacingAndGlyphs">Shelf and Cloths Rod</text>
<path d="M235.6,305 H325.2 V298.6" fill="none" stroke="#d5dae0" stroke-width="0.7"/>
<polygon points="325.2,296.2 324.3,299.2 326.1,299.2" fill="#fff"/>
<polygon points="262.6,245.2 256.5,240.2 256.5,250.2" fill="#f4f6f8"/>
<circle cx="252.7" cy="245.2" r="6.5" fill="#1b2430" stroke="#f4f6f8" stroke-width="0.9"/>
<text x="252.7" y="246.4" font-size="3.0" text-anchor="middle" fill="#eef0f3" font-weight="bold">A402</text>
<text x="266.6" y="241" font-size="2.4" text-anchor="middle" fill="#eef0f3" transform="rotate(-90 266.6 241)">4'5m</text>
<path d="M357.3,190.2 V185 H481.4 V173.3 H518.9 V314 H363.9" fill="none" stroke="#f2f4f6" stroke-width="1.3"/>
<path d="M357.3,190.2 H367.2 V214.8" fill="none" stroke="#f2f4f6" stroke-width="0.9"/>
<path d="M372.2,233 V193.0 H482.3 V306.2 H366.4 V236" fill="none" stroke="#f2f4f6" stroke-width="1.2"/>
<rect x="337.3" y="201.5" width="7.50" height="6.70" rx="0.8" fill="#59616d" stroke="#eef0f3" stroke-width="0.8"/>
<text x="341.05" y="205.95" font-size="3.1" text-anchor="middle" fill="#ffffff" font-weight="bold">P04</text>
<line x1="341" y1="208.2" x2="341" y2="218" stroke="#d5dae0" stroke-width="0.7"/>
<rect x="354.8" y="197.4" width="7.40" height="7.10" rx="0.8" fill="#59616d" stroke="#eef0f3" stroke-width="0.8"/>
<text x="358.5" y="202.04999999999998" font-size="3.1" text-anchor="middle" fill="#ffffff" font-weight="bold">P02</text>
<line x1="358.4" y1="190.2" x2="358.4" y2="197.4" stroke="#d5dae0" stroke-width="0.7"/>
<path d="M368,151.8 H336.2 V231" fill="none" stroke="#d5dae0" stroke-width="0.7"/>
<polygon points="336.2,233.6 335.3,230.6 337.09999999999997,230.6" fill="#fff"/>
<text x="368.9" y="153" font-size="3.45" text-anchor="start" fill="#eef0f3" font-weight="bold" textLength="31.8" lengthAdjust="spacingAndGlyphs">Shower Stall w Seat</text>
<text x="368.9" y="161.8" font-size="3.45" text-anchor="start" fill="#eef0f3" font-weight="bold">Vanity Cabinet under Countertop</text>
<path d="M425,160.6 H447.3 V198" fill="none" stroke="#d5dae0" stroke-width="0.7"/>
<polygon points="447.3,200.9 446.40000000000003,197.9 448.2,197.9" fill="#fff"/>
<text x="368.9" y="172.3" font-size="3.45" text-anchor="start" fill="#eef0f3" font-weight="bold">54" x 48" Wall Mounted Mirror w Wall</text>
<text x="368.9" y="176.8" font-size="3.45" text-anchor="start" fill="#eef0f3" font-weight="bold">Mounted Light Fixtures on Each Side</text>
<path d="M428.3,175.8 H439 V189.6" fill="none" stroke="#d5dae0" stroke-width="0.7"/>
<polygon points="439,192.2 438.1,189.2 439.9,189.2" fill="#fff"/>
<rect x="354" y="216.5" width="18.40" height="19.30" rx="0" fill="none" stroke="#f2f4f6" stroke-width="1.0"/>
<path d="M357.3,220 V231.2 M367.2,220 V231.2 M357.3,226 H367.2" fill="none" stroke="#f2f4f6" stroke-width="1.0"/>
<rect x="311.6" y="222.5" width="41.50" height="54.90" rx="0" fill="none" stroke="#f2f4f6" stroke-width="1.0"/>
<rect x="315" y="225.8" width="34.80" height="48.20" rx="0" fill="none" stroke="#f2f4f6" stroke-width="0.8"/>
<line x1="321.6" y1="225.8" x2="321.6" y2="274" stroke="#d5dae0" stroke-width="0.7"/>
<path d="M322,226.5 L349.3,273.5 M349.3,226.5 L322,273.5" fill="none" stroke="#d5dae0" stroke-width="0.6"/>
<circle cx="335.7" cy="249.9" r="1.3" fill="#1b2430" stroke="#d5dae0" stroke-width="0.6"/>
<path d="M304.5,313.8 H308.6 V282.4 H353.7 V313.8 H363.9 V305.5" fill="none" stroke="#f2f4f6" stroke-width="1.0"/>
<path d="M357.2,277.4 V305.5 H366.4" fill="none" stroke="#f2f4f6" stroke-width="0.9"/>
<line x1="359.6" y1="277.4" x2="359.6" y2="305.5" stroke="#f2f4f6" stroke-width="0.7"/>
<line x1="309" y1="295.8" x2="354" y2="295.8" stroke="#d5dae0" stroke-width="0.8" stroke-dasharray="3.4 2"/>
<rect x="335.9" y="294.8" width="7.70" height="7.10" rx="0.8" fill="#59616d" stroke="#eef0f3" stroke-width="0.8"/>
<text x="339.75" y="299.45000000000005" font-size="3.1" text-anchor="middle" fill="#ffffff" font-weight="bold">P02</text>
<line x1="340" y1="280" x2="340" y2="294.8" stroke="#d5dae0" stroke-width="0.7"/>
<line x1="343.6" y1="298.4" x2="355.4" y2="298.4" stroke="#d5dae0" stroke-width="0.7"/>
<line x1="373" y1="219.6" x2="454" y2="219.6" stroke="#d5dae0" stroke-width="0.8" stroke-dasharray="3.4 2"/>
<line x1="454" y1="193" x2="454" y2="219.6" stroke="#d5dae0" stroke-width="0.8" stroke-dasharray="3.4 2"/>
<line x1="372.2" y1="222.4" x2="482.3" y2="222.4" stroke="#f2f4f6" stroke-width="0.9"/>
<circle cx="393" cy="206.5" r="10.6" fill="none" stroke="#f2f4f6" stroke-width="0.8"/>
<ellipse cx="393" cy="206.9" rx="8.6" ry="8.0" fill="none" stroke="#d5dae0" stroke-width="0.6"/>
<line x1="393" y1="199.5" x2="393" y2="205.5" stroke="#d5dae0" stroke-width="0.7"/>
<circle cx="393" cy="207.3" r="0.7" fill="none" stroke="#d5dae0" stroke-width="0.5"/>
<line x1="391.4" y1="199.6" x2="394.6" y2="199.6" stroke="#d5dae0" stroke-width="0.6"/>
<circle cx="429.9" cy="206.5" r="10.6" fill="none" stroke="#f2f4f6" stroke-width="0.8"/>
<ellipse cx="429.9" cy="206.9" rx="8.6" ry="8.0" fill="none" stroke="#d5dae0" stroke-width="0.6"/>
<line x1="429.9" y1="199.5" x2="429.9" y2="205.5" stroke="#d5dae0" stroke-width="0.7"/>
<circle cx="429.9" cy="207.3" r="0.7" fill="none" stroke="#d5dae0" stroke-width="0.5"/>
<line x1="428.29999999999995" y1="199.6" x2="431.5" y2="199.6" stroke="#d5dae0" stroke-width="0.6"/>
<rect x="466.4" y="198.2" width="7.50" height="7.50" rx="0.8" fill="#59616d" stroke="#eef0f3" stroke-width="0.8"/>
<text x="470.15" y="203.04999999999998" font-size="3.1" text-anchor="middle" fill="#ffffff" font-weight="bold">P04</text>
<line x1="470.6" y1="190" x2="470.6" y2="198.2" stroke="#d5dae0" stroke-width="0.7"/>
<line x1="473.9" y1="202.3" x2="485.5" y2="202.3" stroke="#d5dae0" stroke-width="0.7"/>
<text x="425.5" y="231" font-size="2.8" text-anchor="middle" fill="#eef0f3" font-weight="bold">4' - 6 7/8"</text>
<text x="380.5" y="243.0" font-size="2.4" text-anchor="middle" fill="#eef0f3">4'5m</text>
<text x="380.5" y="269.0" font-size="2.4" text-anchor="middle" fill="#eef0f3">10'5m</text>
<text x="368.8" y="254.5" font-size="2.4" text-anchor="middle" fill="#eef0f3" transform="rotate(-90 368.8 254.5)">4'5m</text>
<text x="393.4" y="254.5" font-size="2.4" text-anchor="middle" fill="#eef0f3" transform="rotate(-90 393.4 254.5)">4'5m</text>
<polygon points="380.5,244.7 390.3,254.5 380.5,264.3 370.7,254.5" fill="#f4f6f8"/>
<circle cx="380.5" cy="254.5" r="5.7" fill="#1b2430" stroke="#f4f6f8" stroke-width="0.6"/>
<text x="380.5" y="255.6" font-size="2.7" text-anchor="middle" fill="#eef0f3" font-weight="bold">A402</text>
<path d="M366.4,264.8 H378" fill="none" stroke="#f2f4f6" stroke-width="0.9"/>
<path d="M366.8,264.8 A40.4,40.4 0 0 1 405.8,305.7" fill="none" stroke="#f2f4f6" stroke-width="1.0"/>
<rect x="404.9" y="305.9" width="3.10" height="7.90" rx="0" fill="#c4cad2" stroke="#f2f4f6" stroke-width="0.6"/>
<line x1="382.2" y1="290" x2="382.2" y2="316.5" stroke="#d5dae0" stroke-width="0.7"/>
<text x="383.2" y="284" font-size="2.6" text-anchor="middle" fill="#eef0f3" font-weight="bold" transform="rotate(-90 383.2 284)">5'/1"</text>
<text x="381.2" y="328.5" font-size="2.8" text-anchor="middle" fill="#eef0f3" font-weight="bold" transform="rotate(-90 381.2 328.5)">Polished</text>
<text x="385.6" y="328.5" font-size="2.8" text-anchor="middle" fill="#eef0f3" font-weight="bold" transform="rotate(-90 385.6 328.5)">Concrete</text>
<text x="395.5" y="336.6" font-size="2.6" text-anchor="middle" fill="#eef0f3" font-weight="bold">6' 4"</text>
<circle cx="413" cy="258.4" r="32.2" fill="none" stroke="#d5dae0" stroke-width="0.7" stroke-dasharray="3.4 2.2"/>
<path d="M426.5,278 A22,22 0 0 0 448.5,300.5" fill="none" stroke="#d5dae0" stroke-width="0.7"/>
<path d="M404.6,241.5 V259 H421.5 L428.8,272 L433.6,270 M404.6,250.4 H421.5" fill="none" stroke="#e6e9ed" stroke-width="3.2" stroke-linecap="round" stroke-linejoin="round"/>
<path d="M401.5,249.3 A14,14 0 1 0 421.8,266.5" fill="none" stroke="#e6e9ed" stroke-width="3.2" stroke-linecap="round" stroke-linejoin="round"/>
<circle cx="406.4" cy="238.0" r="3.2" fill="#e6e9ed" stroke="none" stroke-width="0.0"/>
<path d="M404.6,241.5 V259 H421.5 L428.8,272 L433.6,270 M404.6,250.4 H421.5" fill="none" stroke="#1b2430" stroke-width="2.0" stroke-linecap="round" stroke-linejoin="round"/>
<path d="M401.5,249.3 A14,14 0 1 0 421.8,266.5" fill="none" stroke="#1b2430" stroke-width="2.0" stroke-linecap="round" stroke-linejoin="round"/>
<circle cx="406.4" cy="238.0" r="2.6" fill="#1b2430" stroke="none" stroke-width="0.0"/>
<ellipse cx="455.6" cy="250.7" rx="10.6" ry="9" fill="none" stroke="#f2f4f6" stroke-width="0.9"/>
<ellipse cx="456.2" cy="250.7" rx="9" ry="7.4" fill="none" stroke="#d5dae0" stroke-width="0.5"/>
<rect x="467.3" y="239.1" width="13.20" height="22.40" rx="2.4" fill="none" stroke="#f2f4f6" stroke-width="0.9"/>
<rect x="470.6" y="254" width="6.60" height="5.90" rx="0.8" fill="#59616d" stroke="#eef0f3" stroke-width="0.8"/>
<text x="473.9" y="258.05" font-size="3.1" text-anchor="middle" fill="#ffffff" font-weight="bold">P02</text>
<line x1="474.4" y1="259.9" x2="474.4" y2="269.8" stroke="#d5dae0" stroke-width="0.7"/>
<path d="M445.7,249.9 H436.6 V267.3 H445.7" fill="none" stroke="#d5dae0" stroke-width="0.7"/>
<text x="434.8" y="258.6" font-size="2.6" text-anchor="middle" fill="#eef0f3" font-weight="bold" transform="rotate(-90 434.8 258.6)">1'-6"</text>
<rect x="449.8" y="267.3" width="32.40" height="5.80" rx="0" fill="none" stroke="#f2f4f6" stroke-width="0.9"/>
<rect x="448.5" y="275.6" width="30.40" height="26.80" rx="0" fill="none" stroke="#f2f4f6" stroke-width="0.9"/>
<line x1="448.5" y1="282.3" x2="478.9" y2="282.3" stroke="#d5dae0" stroke-width="0.7"/>
<text x="463.6" y="279.6" font-size="2.4" text-anchor="middle" fill="#eef0f3">2' 6"</text>
<text x="462.2" y="292.6" font-size="2.7" text-anchor="middle" fill="#eef0f3" font-weight="bold" transform="rotate(-90 462.2 292.6)">Washer</text>
<text x="466.6" y="292.6" font-size="2.7" text-anchor="middle" fill="#eef0f3" font-weight="bold" transform="rotate(-90 466.6 292.6)">Dryer</text>
<path d="M488,177.4 V309 H518.9" fill="none" stroke="#f2f4f6" stroke-width="0.9"/>
<line x1="490.5" y1="177.4" x2="490.5" y2="309" stroke="#f2f4f6" stroke-width="0.7"/>
<line x1="488" y1="177.4" x2="518.9" y2="177.4" stroke="#f2f4f6" stroke-width="0.8"/>
<line x1="516.5" y1="177.4" x2="516.5" y2="314" stroke="#f2f4f6" stroke-width="0.8"/>
<path d="M490.5,250.5 H510 V304.9 H490.5" fill="none" stroke="#f2f4f6" stroke-width="0.8"/>
<rect x="502" y="159.1" width="7.60" height="7.50" rx="0.8" fill="#59616d" stroke="#eef0f3" stroke-width="0.8"/>
<text x="505.8" y="163.95" font-size="3.1" text-anchor="middle" fill="#ffffff" font-weight="bold">P02</text>
<line x1="506.1" y1="166.6" x2="506.1" y2="175.7" stroke="#d5dae0" stroke-width="0.7"/>
<rect x="508.8" y="321.5" width="6.60" height="6.60" rx="0.8" fill="#59616d" stroke="#eef0f3" stroke-width="0.8"/>
<text x="512.1" y="325.90000000000003" font-size="3.1" text-anchor="middle" fill="#ffffff" font-weight="bold">P02</text>
<line x1="512.1" y1="309" x2="512.1" y2="321.5" stroke="#d5dae0" stroke-width="0.7"/>
<text x="547.3" y="203.4" font-size="3.45" text-anchor="start" fill="#eef0f3" font-weight="bold" textLength="49" lengthAdjust="spacingAndGlyphs">Built-in Countertop full length</text>
<text x="547.3" y="207.9" font-size="3.45" text-anchor="start" fill="#eef0f3" font-weight="bold">of Wall - Provide Blocking in</text>
<text x="547.3" y="212.4" font-size="3.45" text-anchor="start" fill="#eef0f3" font-weight="bold">Walls as Required.</text>
<line x1="513.8" y1="202.2" x2="546" y2="202.2" stroke="#d5dae0" stroke-width="0.7"/>
<polygon points="510.8,202.2 513.8,201.29999999999998 513.8,203.1" fill="#fff"/>
<text x="547.3" y="264.3" font-size="3.45" text-anchor="start" fill="#eef0f3" font-weight="bold" textLength="51" lengthAdjust="spacingAndGlyphs">Shelving Unit above Countertop</text>
<line x1="512.6" y1="263.1" x2="546" y2="263.1" stroke="#d5dae0" stroke-width="0.7"/>
<polygon points="509.6,263.1 512.6,262.20000000000005 512.6,264.0" fill="#fff"/>
<polygon points="542.9,243.5 549,238.5 549,248.5" fill="#f4f6f8"/>
<circle cx="552.8" cy="243.5" r="6.5" fill="#1b2430" stroke="#f4f6f8" stroke-width="0.9"/>
<text x="552.8" y="244.7" font-size="3.0" text-anchor="middle" fill="#eef0f3" font-weight="bold">A402</text>
<text x="540.6" y="238.5" font-size="2.4" text-anchor="middle" fill="#eef0f3" transform="rotate(-90 540.6 238.5)">4'5m</text>
</svg>
<svg width="750" height="422" viewBox="0 0 750 422" style="left:0;top:0;font-family:'Liberation Sans',sans-serif">
<rect x="0.5" y="0.5" width="11" height="10.5" rx="1.2" fill="#1a5fd0" stroke="#0c2f8a" stroke-width="0.5" />
<text x="6" y="8.6" font-size="7.6" font-weight="bold" fill="#fff" text-anchor="middle">R</text>
<rect x="13.6" y="2.6" width="7" height="6.6" rx="0" fill="#f2f2f2" stroke="#555" stroke-width="0.7" />
<rect x="13.6" y="2.6" width="7" height="1.8" rx="0" fill="#666" stroke="none" stroke-width="0.6" />
<path d="M13.6,6.4 H20.6 M16.2,4.4 V9.2" fill="none" stroke="#555" stroke-width="0.5" />
<path d="M25.8,8.8 V2.6 H28.6 L29.4,3.6 H32.6 V5 M25.8,8.8 L27.6,5 H34.2 L32.4,8.8 Z" fill="#f4f4f4" stroke="#555" stroke-width="0.7" />
<rect x="38.6" y="2.2" width="7" height="7" rx="0" fill="#3a3a3a" stroke="#222" stroke-width="0.4" />
<rect x="40" y="2.2" width="4.2" height="2.6" rx="0" fill="#e8e8e8" stroke="none" stroke-width="0.6" />
<rect x="40.2" y="6.4" width="3.8" height="2.8" rx="0" fill="#bdbdbd" stroke="none" stroke-width="0.6" />
<circle cx="53" cy="5.6" r="3" fill="none" stroke="#b9b9b9" stroke-width="0.9" />
<circle cx="56.4" cy="4.2" r="1.6" fill="#e0e0e0" stroke="#b9b9b9" stroke-width="0.6" />
<polygon points="59.9,5.2 62.1,5.2 61,6.5" fill="#333"/>
<path d="M66.6,5.4 L69.4,3 V4.4 H72 Q74.4,4.6 74.4,7.6 Q73.6,6.2 72,6.4 H69.4 V7.8 Z" fill="#f0f0f0" stroke="#444" stroke-width="0.5" />
<polygon points="76.9,5.2 79.1,5.2 78,6.5" fill="#333"/>
<path d="M91,5.4 L88.2,3 V4.4 H85.6 Q83.2,4.6 83.2,7.6 Q84,6.2 85.6,6.4 H88.2 V7.8 Z" fill="#ececec" stroke="#b5b5b5" stroke-width="0.5" />
<polygon points="93.9,5.2 96.1,5.2 95,6.5" fill="#555"/>
<rect x="100.6" y="1.8" width="6" height="2.6" rx="0" fill="#fff" stroke="#555" stroke-width="0.5" />
<rect x="99.2" y="4.2" width="8.8" height="3.6" rx="0.6" fill="#4a4a4a" stroke="#333" stroke-width="0.4" />
<rect x="100.8" y="6.6" width="5.6" height="2.8" rx="0" fill="#fff" stroke="#555" stroke-width="0.5" />
<rect x="100.2" y="5" width="7" height="0.9" rx="0" fill="#1e88d8" stroke="none" stroke-width="0.6" />
<rect x="111.4" y="3" width="7" height="6.6" rx="0.6" fill="#e02b2b" stroke="#a81818" stroke-width="0.4" />
<rect x="113" y="4.8" width="3" height="3.2" rx="0" fill="#fff" stroke="none" stroke-width="0.6" />
<rect x="116.2" y="1.6" width="2.6" height="2.6" rx="0" fill="#1e88d8" stroke="none" stroke-width="0.6" />
<path d="M113.2,2.2 V3.2 M115,2.2 V3.2" fill="none" stroke="#a81818" stroke-width="0.6" />
<path d="M122.3,1.5 V10" fill="none" stroke="#c2c2c2" stroke-width="0.5" />
<path d="M125.4,2.2 V8 M132.6,2.2 V8 M125.4,3.6 H132.6" fill="none" stroke="#555" stroke-width="0.7" />
<path d="M130.6,5.4 V9 M129.4,7.6 L130.6,9.2 L131.8,7.6" fill="none" stroke="#f08a1c" stroke-width="0.9" />
<path d="M136.8,1.5 V10" fill="none" stroke="#c2c2c2" stroke-width="0.5" />
<rect x="140.4" y="4.8" width="7" height="2.2" rx="0" fill="#f0a020" stroke="none" stroke-width="0.6" />
<path d="M140.4,3 V8.4 M147.4,3 V8.4 M140.4,3.8 H147.4" fill="none" stroke="#555" stroke-width="0.5" />
<polygon points="150.9,5.2 153.1,5.2 152,6.5" fill="#333"/>
<path d="M158.2,2.6 L164,8.6" fill="none" stroke="#1e88d8" stroke-width="1.1" />
<circle cx="158.2" cy="2.6" r="0.9" fill="#1e88d8" stroke="none" stroke-width="0.6" />
<circle cx="164" cy="8.6" r="0.9" fill="#1e88d8" stroke="none" stroke-width="0.6" />
<path d="M168.6,8.6 L171,5.8" fill="none" stroke="#555" stroke-width="0.7" />
<circle cx="172.6" cy="4.6" r="2.2" fill="#f3f3f3" stroke="#555" stroke-width="0.6" />
<text x="183.3" y="9" font-size="9" fill="#333" text-anchor="middle">A</text>
<path d="M190,1.5 V10" fill="none" stroke="#c2c2c2" stroke-width="0.5" />
<path d="M193.6,5.6 L197.4,2 L201.2,5.6 M194.6,5 V9.2 H200.2 V5" fill="#f6f6f6" stroke="#555" stroke-width="0.8" />
<rect x="196.6" y="6.4" width="1.6" height="2.8" rx="0" fill="#f0a020" stroke="none" stroke-width="0.6" />
<polygon points="204.9,5.2 207.1,5.2 206,6.5" fill="#333"/>
<circle cx="214.5" cy="5.4" r="2.6" fill="#f6f6f6" stroke="#555" stroke-width="0.7" />
<path d="M214.5,1.4 L218.4,5.4 L214.5,9.4" fill="none" stroke="#555" stroke-width="0.7" />
<rect x="220.4" y="0.4" width="11.8" height="10.2" rx="0" fill="#cfe8f7" stroke="#6ab6e0" stroke-width="0.5" />
<path d="M222.4,2.6 H230.4 M222.4,4.6 H225.4 M227.6,4.6 H230.4 M222.4,6.6 H224.8 M227,6.6 H230.4 M222.4,8.6 H230.4" fill="none" stroke="#555" stroke-width="0.8" />
<path d="M227.8,2 L225,9.2" fill="none" stroke="#1e88d8" stroke-width="1" />
<rect x="236" y="2" width="4.4" height="5" rx="0" fill="#e6e6e6" stroke="#b9b9b9" stroke-width="0.5" />
<rect x="238" y="3.4" width="4.4" height="5" rx="0" fill="#e6e6e6" stroke="#b9b9b9" stroke-width="0.5" />
<path d="M241.6,7 L244,9.4 M244,7 L241.6,9.4" fill="none" stroke="#e02020" stroke-width="0.9" />
<rect x="248" y="2.6" width="5" height="3.6" rx="0" fill="#f6f6f6" stroke="#555" stroke-width="0.6" />
<rect x="250.4" y="5" width="5" height="3.6" rx="0" fill="#f6f6f6" stroke="#555" stroke-width="0.6" />
<polygon points="258.29999999999995,5.2 260.5,5.2 259.4,6.5" fill="#333"/>
<path d="M264.4,4 H268.6" fill="none" stroke="#555" stroke-width="0.6" />
<polygon points="265.4,6.0 267.6,6.0 266.5,7.3" fill="#333"/>
<path d="M585.2,4 V8 M588.2,4 V8 M585,6 H588.4" fill="none" stroke="#555" stroke-width="1.6" />
<circle cx="585.2" cy="3.6" r="1" fill="#555" stroke="none" stroke-width="0.6" />
<circle cx="588.2" cy="3.6" r="1" fill="#555" stroke="none" stroke-width="0.6" />
<polygon points="579.5,5.2 581.7,5.2 580.6,6.5" fill="#333"/>
<circle cx="603.6" cy="4" r="1.6" fill="#1c5fae" stroke="none" stroke-width="0.6" />
<path d="M600.8,9.2 Q600.8,6 603.6,6 Q606.4,6 606.4,9.2 Z" fill="#1c5fae" stroke="none" stroke-width="0" />
<polygon points="650.9,5.2 653.1,5.2 652,6.5" fill="#333"/>
<path d="M658.4,2.4 H660 L661.4,7 H665.4 L666.2,3.8 H660.6" fill="none" stroke="#1c4f8e" stroke-width="0.8" />
<circle cx="662" cy="8.6" r="0.7" fill="#1c4f8e" stroke="none" stroke-width="0.6" />
<circle cx="665" cy="8.6" r="0.7" fill="#1c4f8e" stroke="none" stroke-width="0.6" />
<path d="M670.3,1.5 V10" fill="none" stroke="#c2c2c2" stroke-width="0.5" />
<circle cx="678.5" cy="5.6" r="3.7" fill="#fff" stroke="#2e6fc0" stroke-width="0.8" />
<text x="678.5" y="7.7" font-size="5.8" font-weight="bold" fill="#2e6fc0" text-anchor="middle">?</text>
<polygon points="685.9,5.2 688.1,5.2 687,6.5" fill="#333"/>
<path d="M718.6,7.8 H722.4" fill="none" stroke="#222" stroke-width="0.9" />
<rect x="729.6" y="4.2" width="4.2" height="3.8" rx="0" fill="none" stroke="#222" stroke-width="0.7" />
<path d="M731,4.2 V2.8 H735.2 V6.6 H733.8" fill="none" stroke="#222" stroke-width="0.7" />
<path d="M741.6,2.6 L747,8 M747,2.6 L741.6,8" fill="none" stroke="#111" stroke-width="0.9" />
<rect x="496.6" y="16" width="7.4" height="4.4" rx="2.2" fill="#e9e9e9" stroke="#555" stroke-width="0.6" />
<circle cx="500.3" cy="18.2" r="1" fill="#555" stroke="none" stroke-width="0.6" />
<polygon points="505.9,17.799999999999997 508.1,17.799999999999997 507,19.099999999999998" fill="#333"/>
<path d="M14.4,27 V38.6 L17,36.2 L18.8,40.4 L20.4,39.7 L18.6,35.6 H22.2 Z" fill="#fff" stroke="#666" stroke-width="0.7" />
<path d="M49.6,26.2 H59.4 L62.4,29.2 V32 M49.6,26.2 V37.2 H56" fill="#fbfbfb" stroke="#7a7a7a" stroke-width="0.9" />
<path d="M59.4,26.2 V29.2 H62.4 Z" fill="#444" stroke="#444" stroke-width="0.5" />
<circle cx="60.6" cy="36.2" r="3.3" fill="#f5f5f5" stroke="#777" stroke-width="0.8" stroke-dasharray="1.6 1"/>
<polygon points="72.9,48.8 75.1,48.8 74,50.1" fill="#333"/>
<polygon points="31.9,62.6 34.1,62.6 33,63.900000000000006" fill="#333"/>
<rect x="78.4" y="26" width="6.6" height="6.6" rx="0.8" fill="none" stroke="#777" stroke-width="0.7" stroke-dasharray="1.5 0.9"/>
<path d="M79.0,32 L84.4,26.6" fill="none" stroke="#777" stroke-width="0.6" />
<rect x="82.2" y="29.8" width="2.6" height="2.4" rx="0" fill="#1e88d8" stroke="none" stroke-width="0.6" />
<rect x="78.4" y="37.8" width="6.6" height="6.6" rx="0.8" fill="none" stroke="#777" stroke-width="0.7" stroke-dasharray="1.5 0.9"/>
<path d="M79.0,43.8 L84.4,38.4" fill="none" stroke="#777" stroke-width="0.6" />
<path d="M78.4,49.4 H81.4 M78.4,51.5 H81 M78.4,53.6 H80.4 M78.4,55.7 H80" fill="none" stroke="#333" stroke-width="1.0" />
<path d="M83.6,49.4 H85.8 M83.2,51.5 H85.8 M82.6,53.6 H85.8 M82,55.7 H85.8" fill="none" stroke="#9a9a9a" stroke-width="0.8" />
<path d="M83.4,48.4 L80.8,56.4" fill="none" stroke="#1e88d8" stroke-width="1.0" />
<rect x="146.6" y="26.4" width="5" height="5.8" rx="0.4" fill="#fff" stroke="#7a9cc0" stroke-width="0.6" stroke-dasharray="1.4 0.8"/>
<rect x="150" y="29" width="3.2" height="3.2" rx="0" fill="#f0a020" stroke="none" stroke-width="0.6" />
<rect x="146.6" y="38.199999999999996" width="5" height="5.8" rx="0.4" fill="#fff" stroke="#7a9cc0" stroke-width="0.6" stroke-dasharray="1.4 0.8"/>
<rect x="150" y="40.8" width="3.2" height="3.2" rx="0" fill="#1e88d8" stroke="none" stroke-width="0.6" />
<rect x="146.6" y="48.6" width="6.4" height="6.6" rx="0" fill="#1e88d8" stroke="#176db0" stroke-width="0.4" />
<rect x="149.6" y="48.6" width="3.4" height="3.2" rx="0" fill="#e02b2b" stroke="none" stroke-width="0.6" />
<path d="M147.4,53.6 H152.2" fill="none" stroke="#fff" stroke-width="0.7" />
<path d="M213,62.6 L215,64.2 M215,62.6 V64.4 H213.2" fill="none" stroke="#666" stroke-width="0.5" />
<path d="M230.4,33.2 Q230.4,38 235,38 Q239.6,38 239.6,33.2 Z M230.4,33.6 Q226.6,31 227.4,30 M239.6,33.8 Q243,34.4 242.4,31.8 Q241.4,31 239.6,32.4 M232.6,33 Q235,29.8 237.4,33 M235,31 V29.6" fill="none" stroke="#cdcdcd" stroke-width="0.8" />
<path d="M264.9,32.800000000000004 Q264.9,37.6 269.5,37.6 Q274.1,37.6 274.1,32.800000000000004 Z M264.9,33.2 Q261.1,30.6 261.9,29.6 M274.1,33.4 Q277.5,34.0 276.9,31.400000000000002 Q275.9,30.6 274.1,32.0 M267.1,32.6 Q269.5,29.400000000000002 271.9,32.6 M269.5,30.6 V29.200000000000003" fill="none" stroke="#555" stroke-width="0.8" />
<path d="M272,38.8 Q270.4,38.8 270.6,37.2 Q271,35.8 272.6,36.2 Q273.4,34 275.6,34.6 Q277.4,35.2 277.2,36.8 Q278.8,37 278.6,38.2 Q278.4,38.9 277.4,38.8 Z" fill="#1e88d8" stroke="none" stroke-width="0" />
<polygon points="287.7,48.8 289.90000000000003,48.8 288.8,50.1" fill="#333"/>
<circle cx="309" cy="33" r="7.2" fill="#0b0b0b" stroke="none" stroke-width="0.6" />
<path d="M303.4,31.6 H314.8 M309.6,31.6 L307.6,39.6" fill="none" stroke="#fff" stroke-width="1.5" />
<path d="M311,34 H314.6" fill="none" stroke="#fff" stroke-width="1.2" />
<polygon points="308.09999999999997,50.8 310.3,50.8 309.2,52.1" fill="#333"/>
<path d="M335,32.6 L341.2,26.6 L347.8,32.6" fill="none" stroke="#4a4a4a" stroke-width="1.6" />
<path d="M336,32.4 V40 H346.8 V32.4 L341.2,27.6 Z" fill="#fafafa" stroke="#666" stroke-width="0.6" />
<path d="M341.2,27.2 L345.4,26.4 L348.6,31.4 L347.6,32.6 Z" fill="#6a6a6a" stroke="none" stroke-width="0" />
<rect x="339.6" y="35.4" width="2.2" height="4.4" rx="0" fill="#f0a020" stroke="#c07810" stroke-width="0.3" />
<polygon points="348.7,48.8 350.90000000000003,48.8 349.8,50.1" fill="#333"/>
<circle cx="358.9" cy="32.4" r="3.6" fill="#fafafa" stroke="#444" stroke-width="0.8" />
<path d="M359,27 L366.2,32.4 L359,37.8" fill="none" stroke="#444" stroke-width="0.9" />
<path d="M358.9,36 V40" fill="none" stroke="#444" stroke-width="0.8" />
<rect x="394" y="30.2" width="9" height="9.8" rx="2.4" fill="#fafafa" stroke="#888" stroke-width="0.7" stroke-dasharray="1.6 1"/>
<circle cx="405" cy="28.6" r="2.3" fill="#f4f4f4" stroke="#777" stroke-width="0.6" />
<path d="M403.4,28.6 H406.6 M405,27 V30.2" fill="none" stroke="#777" stroke-width="0.5" />
<polygon points="399.4,50.6 401.6,50.6 400.5,51.900000000000006" fill="#333"/>
<rect x="434" y="27.2" width="7" height="5" rx="0" fill="#f4f4f4" stroke="#555" stroke-width="0.7" />
<path d="M434,32.2 L441,27.2 M436,27.2 V32.2" fill="none" stroke="#555" stroke-width="0.5" />
<polygon points="444.09999999999997,29.0 446.3,29.0 445.2,30.3" fill="#333"/>
<path d="M433.6,41.2 L437.6,37.6 L441.6,41.2 M434.8,40.8 V44.8 H440.4 V40.8" fill="#fafafa" stroke="#333" stroke-width="0.9" />
<polygon points="444.5,41.0 446.70000000000005,41.0 445.6,42.300000000000004" fill="#333"/>
<path d="M452.6,27.8 H458.0 V29.8 H459.20000000000005 V32.2 H451.6 V29.8 H452.6 Z M452.8,30.799999999999997 H457.8" fill="#f4f4f4" stroke="#555" stroke-width="0.7" />
<rect x="453.20000000000005" y="39.4" width="4.2" height="4.2" rx="0" fill="#bfe0f6" stroke="#1e88d8" stroke-width="0.9" />
<path d="M451.6,37.8 L453.6,39.8 M459.0,37.8 L457.0,39.8 M451.6,45.199999999999996 L453.6,43.199999999999996 M459.0,45.199999999999996 L457.0,43.199999999999996" fill="none" stroke="#555" stroke-width="0.7" />
<polygon points="461.9,41.0 464.1,41.0 463,42.300000000000004" fill="#333"/>
<rect x="451.6" y="49" width="7.4" height="6.4" rx="0" fill="#f0f0f0" stroke="#444" stroke-width="0.7" />
<rect x="451.6" y="49" width="7.4" height="1.8" rx="0" fill="#444" stroke="none" stroke-width="0.6" />
<path d="M451.6,52.4 H459.0 M451.6,53.9 H459.0 M454.1,50.8 V55.4 M456.6,50.8 V55.4" fill="none" stroke="#777" stroke-width="0.4" />
<polygon points="461.9,52.0 464.1,52.0 463,53.300000000000004" fill="#333"/>
<rect x="468.4" y="26.6" width="7.4" height="6.4" rx="0" fill="#f0f0f0" stroke="#444" stroke-width="0.7" />
<rect x="468.4" y="26.6" width="7.4" height="1.8" rx="0" fill="#444" stroke="none" stroke-width="0.6" />
<path d="M468.4,30.0 H475.79999999999995 M468.4,31.5 H475.79999999999995 M470.9,28.400000000000002 V33.0 M473.4,28.400000000000002 V33.0" fill="none" stroke="#777" stroke-width="0.4" />
<polygon points="478.29999999999995,29.0 480.5,29.0 479.4,30.3" fill="#333"/>
<path d="M472.09999999999997,37.8 V45.199999999999996 M468.4,41.5 H475.79999999999995" fill="none" stroke="#5aa7de" stroke-width="0.8" />
<circle cx="472.09999999999997" cy="41.5" r="1.9" fill="none" stroke="#1e88d8" stroke-width="0.8" />
<path d="M495.2,27.6 H499.59999999999997 L502.0,29.6 V33.0 H495.2 Z" fill="#fbfbfb" stroke="#444" stroke-width="0.7" />
<circle cx="496.4" cy="27" r="1.5" fill="#f6a21e" stroke="none" stroke-width="0.6" />
<path d="M507,27.6 H511.4 L513.8,29.6 V33.0 H507 Z" fill="#fbfbfb" stroke="#c9c9c9" stroke-width="0.7" />
<path d="M518.4,27.6 H522.8 L525.1999999999999,29.6 V33.0 H518.4 Z" fill="#fbfbfb" stroke="#555" stroke-width="0.7" />
<path d="M521.6,25.6 V33.8" fill="none" stroke="#1e88d8" stroke-width="0.9" />
<path d="M495.2,39.2 H499.59999999999997 L502.0,41.2 V44.6 H495.2 Z" fill="#fbfbfb" stroke="#cfcfcf" stroke-width="0.7" />
<path d="M497,40.4 H500 M497,42.4 H500" fill="none" stroke="#cfcfcf" stroke-width="0.5" />
<circle cx="509" cy="43" r="2.2" fill="#f2f2f2" stroke="#444" stroke-width="0.8" />
<path d="M510.8,41.2 L513.6,38.6" fill="none" stroke="#444" stroke-width="0.9" />
<circle cx="521.6" cy="40.4" r="2.2" fill="#f2f2f2" stroke="#555" stroke-width="0.7" />
<path d="M518,40.2 H519.6" fill="none" stroke="#333" stroke-width="0.8" />
<path d="M520.8,42.4 L524.4,46 M524.4,42.4 L520.8,46" fill="none" stroke="#1e88d8" stroke-width="1.1" />
<path d="M507,49 H513.6 M507,51.2 H513.6 M507,53.4 H513.6 M507,55.6 H513.6 M507,49 V55.6 M509.2,49 V55.6 M511.4,49 V55.6 M513.6,49 V55.6" fill="none" stroke="#d4d4d4" stroke-width="0.5" />
<path d="M518.4,50 H522.8 L525.1999999999999,52 V55.4 H518.4 Z" fill="#fbfbfb" stroke="#cfcfcf" stroke-width="0.7" />
<polygon points="528.3,52.0 530.5,52.0 529.4,53.300000000000004" fill="#333"/>
<rect x="550.4" y="26.8" width="10" height="7" rx="0" fill="#fafafa" stroke="#444" stroke-width="0.8" />
<rect x="550.4" y="26.8" width="10" height="1.6" rx="0" fill="#444" stroke="none" stroke-width="0.6" />
<rect x="555" y="31.4" width="10" height="7.6" rx="0" fill="#fafafa" stroke="#444" stroke-width="0.8" />
<rect x="555" y="31.4" width="10" height="1.6" rx="0" fill="#444" stroke="none" stroke-width="0.6" />
<path d="M562,27.6 H564.6 V30.2 M550.6,36 V38.4 H553.4" fill="none" stroke="#444" stroke-width="0.6" />
<polygon points="568.6999999999999,48.8 570.9,48.8 569.8,50.1" fill="#333"/>
<rect x="574.6" y="26.8" width="6" height="8" rx="0" fill="#ececec" stroke="#c4c4c4" stroke-width="0.6" />
<rect x="577" y="28.6" width="6.4" height="8.6" rx="0" fill="#e4e4e4" stroke="#bdbdbd" stroke-width="0.6" />
<path d="M578,30.6 H582.4 M578,32.4 H582.4 M578,34.2 H582.4" fill="none" stroke="#a8bfd4" stroke-width="0.6" />
<path d="M582.8,34.4 L587.4,39 M587.4,34.4 L582.8,39" fill="none" stroke="#e01818" stroke-width="1.4" />
<rect x="592.4" y="28.8" width="13.6" height="10.6" rx="0" fill="#fafafa" stroke="#555" stroke-width="0.8" />
<path d="M592.4,31.6 H606 M594,33.8 H604.4 M594,36.2 H604.4" fill="none" stroke="#666" stroke-width="0.7" />
<rect x="593.2" y="26.6" width="4.6" height="2.4" rx="0" fill="#fafafa" stroke="#555" stroke-width="0.6" />
<rect x="598" y="26.6" width="3.6" height="2.4" rx="0" fill="#e6e6e6" stroke="#888" stroke-width="0.5" />
<rect x="601.8" y="26.6" width="3.6" height="2.4" rx="0" fill="#e6e6e6" stroke="#888" stroke-width="0.5" />
<rect x="616.2" y="25.8" width="14.4" height="14.4" rx="0" fill="#fafafa" stroke="#444" stroke-width="0.9" />
<path d="M623.4,25.8 V40.2" fill="none" stroke="#444" stroke-width="0.9" />
<path d="M616.2,27.8 H630.6" fill="none" stroke="#444" stroke-width="0.7" />
<rect x="655" y="25.8" width="13.4" height="11" rx="0" fill="#fafafa" stroke="#555" stroke-width="0.8" />
<rect x="655" y="25.8" width="13.4" height="2" rx="0" fill="#555" stroke="none" stroke-width="0.6" />
<path d="M655,30.4 H668.4 M658.6,30.4 V36.8" fill="none" stroke="#777" stroke-width="0.6" />
<path d="M656,32.4 H658 M656,34.4 H658" fill="none" stroke="#777" stroke-width="0.6" />
<path d="M663,40 L667.4,35.6" fill="none" stroke="#1e88d8" stroke-width="1.7" />
<path d="M666.2,34.6 Q667.6,32.4 670,33.2 L668.4,34.8 L669,36 L670.8,35 Q670.6,37.6 668,37.2 Z" fill="#1e88d8" stroke="none" stroke-width="0" />
<polygon points="678.9,48.8 681.1,48.8 680,50.1" fill="#333"/>
<path d="M695.2,26.6 V28 M699.6,28.2 L700.6,27 M701.8,33.2 H703.2 M699.6,38 L700.6,39.2 M695.2,38.4 V39.8 M701,30.4 L702.2,29.8 M701,36 L702.2,36.6" fill="none" stroke="#999" stroke-width="0.6" />
<circle cx="696.6" cy="33.2" r="4" fill="#fafafa" stroke="#8a8a8a" stroke-width="0.6" />
<circle cx="694.2" cy="33.2" r="4.1" fill="#4a4a4a" stroke="none" stroke-width="0.6" />
</svg>
<svg width="750" height="422" viewBox="0 0 750 422" style="left:0;top:0;font-family:'Liberation Sans',sans-serif">
<path d="M179.4,82.2 H182.8 L184.8,84.2 V88.8 H179.4 Z M182.8,82.2 V84.2 H184.8" fill="#fbfbfb" stroke="#8a8a8a" stroke-width="0.6" />
<path d="M238.8,82.2 H242.20000000000002 L244.20000000000002,84.2 V88.8 H238.8 Z M242.20000000000002,82.2 V84.2 H244.20000000000002" fill="#fbfbfb" stroke="#8a8a8a" stroke-width="0.6" />
<path d="M334.2,85.6 L337.4,82.4 L340.6,85.6 M335,85.2 V88.6 H339.8 V85.2" fill="#f4f4f4" stroke="#8a8a8a" stroke-width="0.7" />
<path d="M325.8,83.6 L329,86.8 M329,83.6 L325.8,86.8" fill="none" stroke="#333" stroke-width="0.6" />
<path d="M169.8,83.4 L173.2,86.8 M173.2,83.4 L169.8,86.8" fill="none" stroke="#333" stroke-width="0.6" />
<path d="M744.4,83.4 L747.8,86.8 M747.8,83.4 L744.4,86.8" fill="none" stroke="#333" stroke-width="0.6" />
<path d="M623.2,83.6 H626.8 M623.6,85 L625,86.6 L626.4,85" fill="none" stroke="#444" stroke-width="0.6" />
<path d="M10,98.2 H19.6 L23.2,100.4 V112.2 H10 Z" fill="#fafafa" stroke="#8a8a8a" stroke-width="0.7" />
<path d="M15.6,103.4 H19.4 V101.6 H23.2 V112.6 H15.6 Z" fill="#f6f6f6" stroke="#8a8a8a" stroke-width="0.7" />
<path d="M169,104.2 L170.4,105.8 L171.8,104.2" fill="none" stroke="#444" stroke-width="0.7" />
<path d="M129.4,128 L130.8,129.6 L132.2,128" fill="none" stroke="#444" stroke-width="0.6" />
<rect x="136.2" y="125.6" width="2.6" height="2.6" rx="0" fill="#f4f4f4" stroke="#666" stroke-width="0.5" />
<rect x="139.6" y="125.6" width="2.6" height="2.6" rx="0" fill="#f4f4f4" stroke="#666" stroke-width="0.5" />
<rect x="136.2" y="129" width="2.6" height="3.2" rx="0" fill="#f4f4f4" stroke="#666" stroke-width="0.5" />
<rect x="139.6" y="129" width="2.6" height="3.2" rx="0" fill="#1e88d8" stroke="#666" stroke-width="0.5" />
<path d="M160.4,142.20000000000002 L161.6,140.6 L162.8,142.20000000000002 M160.4,143.4 H162.8" fill="none" stroke="#444" stroke-width="0.55" />
<path d="M160.4,327.3 L161.6,325.7 L162.8,327.3 M160.4,328.5 H162.8" fill="none" stroke="#444" stroke-width="0.55" />
<path d="M160.4,361.1 L161.6,359.5 L162.8,361.1 M160.4,362.3 H162.8" fill="none" stroke="#444" stroke-width="0.55" />
<path d="M167.6,142.4 L169.4,140.6 L171.2,142.4" fill="none" stroke="#555" stroke-width="0.7" />
<path d="M167.6,373.6 L169.4,375.4 L171.2,373.6" fill="none" stroke="#555" stroke-width="0.7" />
<path d="M623,96.2 L624.8,94.4 L626.6,96.2" fill="none" stroke="#555" stroke-width="0.7" />
<path d="M623,377.8 L624.8,379.6 L626.6,377.8" fill="none" stroke="#555" stroke-width="0.7" />
<path d="M615.4,385.4 L617.2,387 L615.4,388.6" fill="none" stroke="#555" stroke-width="0.7" />
<path d="M353.8,385.4 L352.2,387 L353.8,388.6" fill="none" stroke="#555" stroke-width="0.7" />
<path d="M745,112.6 L746.6,111 L748.2,112.6" fill="none" stroke="#555" stroke-width="0.7" />
<path d="M745,386.2 L746.6,387.8 L748.2,386.2" fill="none" stroke="#555" stroke-width="0.7" />
<rect x="605.2" y="92.6" width="15.2" height="53.2" rx="2" fill="#56606d" stroke="#3f4853" stroke-width="0.5" />
<circle cx="611.6" cy="105.8" r="3.6" fill="#c9ced6" stroke="#e9ecf0" stroke-width="0.9" />
<circle cx="611.2" cy="105.4" r="1.8" fill="#6d7681" stroke="#eef0f3" stroke-width="0.5" />
<path d="M614,108.4 L615.4,109.8" fill="none" stroke="#2a7fd0" stroke-width="1.1" />
<path d="M610.4,115.6 L611.6,116.8 L612.8,115.6" fill="none" stroke="#8e96a0" stroke-width="0.6" />
<path d="M606.6,118.8 H619" fill="none" stroke="#6d7681" stroke-width="0.5" />
<path d="M608.6,125.4 Q609,121.8 612,122.4 Q615.4,122.8 614.6,126 Q613.4,129.2 610.4,128.4 Q608.2,127.8 608.6,125.4 Z" fill="#7faa72" stroke="none" stroke-width="0" />
<rect x="613" y="126.8" width="1.8" height="1.8" rx="0" fill="#d9dde2" stroke="none" stroke-width="0.6" />
<path d="M610.4,135.6 L611.6,136.8 L612.8,135.6" fill="none" stroke="#8e96a0" stroke-width="0.6" />
<circle cx="617.2" cy="95.4" r="1.1" fill="#3c444e" stroke="#aab0b8" stroke-width="0.4" />
<circle cx="617.2" cy="143.2" r="1.1" fill="#3c444e" stroke="#aab0b8" stroke-width="0.4" />
<circle cx="642.4" cy="97.6" r="2.3" fill="none" stroke="#555" stroke-width="0.7" />
<path d="M644,99.4 L646,101.6" fill="none" stroke="#555" stroke-width="0.8" />
<rect x="642.2" y="108.6" width="6.4" height="6.8" rx="1.4" fill="#f6f6f6" stroke="#666" stroke-width="0.6" stroke-dasharray="1.6 0.9"/>
<circle cx="645.4" cy="112" r="1.5" fill="none" stroke="#555" stroke-width="0.6" />
<path d="M634.4,112.2 H637.4" fill="none" stroke="#333" stroke-width="0.7" />
<path d="M636,117 V385" fill="none" stroke="#a8a8a8" stroke-width="0.5" stroke-dasharray="0.7 1.1"/>
<path d="M643.8,126 V216" fill="none" stroke="#a8a8a8" stroke-width="0.5" stroke-dasharray="0.7 1.1"/>
<path d="M643.8,323 V376" fill="none" stroke="#a8a8a8" stroke-width="0.5" stroke-dasharray="0.7 1.1"/>
<path d="M644,131.68 H656" fill="none" stroke="#a8a8a8" stroke-width="0.5" stroke-dasharray="0.7 1.1"/>
<path d="M644,141.06 H656" fill="none" stroke="#a8a8a8" stroke-width="0.5" stroke-dasharray="0.7 1.1"/>
<path d="M644,150.44 H656" fill="none" stroke="#a8a8a8" stroke-width="0.5" stroke-dasharray="0.7 1.1"/>
<path d="M644,159.82 H656" fill="none" stroke="#a8a8a8" stroke-width="0.5" stroke-dasharray="0.7 1.1"/>
<path d="M644,169.20 H656" fill="none" stroke="#a8a8a8" stroke-width="0.5" stroke-dasharray="0.7 1.1"/>
<path d="M644,178.58 H656" fill="none" stroke="#a8a8a8" stroke-width="0.5" stroke-dasharray="0.7 1.1"/>
<path d="M644,187.96 H656" fill="none" stroke="#a8a8a8" stroke-width="0.5" stroke-dasharray="0.7 1.1"/>
<path d="M644,197.34 H656" fill="none" stroke="#a8a8a8" stroke-width="0.5" stroke-dasharray="0.7 1.1"/>
<path d="M644,206.72 H656" fill="none" stroke="#a8a8a8" stroke-width="0.5" stroke-dasharray="0.7 1.1"/>
<path d="M644,216.10 H656" fill="none" stroke="#a8a8a8" stroke-width="0.5" stroke-dasharray="0.7 1.1"/>
<path d="M644,328.66 H656" fill="none" stroke="#a8a8a8" stroke-width="0.5" stroke-dasharray="0.7 1.1"/>
<path d="M644,338.04 H656" fill="none" stroke="#a8a8a8" stroke-width="0.5" stroke-dasharray="0.7 1.1"/>
<path d="M644,347.42 H656" fill="none" stroke="#a8a8a8" stroke-width="0.5" stroke-dasharray="0.7 1.1"/>
<path d="M644,356.80 H656" fill="none" stroke="#a8a8a8" stroke-width="0.5" stroke-dasharray="0.7 1.1"/>
<path d="M644,366.18 H656" fill="none" stroke="#a8a8a8" stroke-width="0.5" stroke-dasharray="0.7 1.1"/>
<path d="M644,375.56 H656" fill="none" stroke="#a8a8a8" stroke-width="0.5" stroke-dasharray="0.7 1.1"/>
<path d="M636.4,122.30 H641" fill="none" stroke="#a8a8a8" stroke-width="0.5" stroke-dasharray="0.7 1.1"/>
<path d="M636.4,225.48 H641" fill="none" stroke="#a8a8a8" stroke-width="0.5" stroke-dasharray="0.7 1.1"/>
<path d="M636.4,234.86 H641" fill="none" stroke="#a8a8a8" stroke-width="0.5" stroke-dasharray="0.7 1.1"/>
<path d="M636.4,244.24 H641" fill="none" stroke="#a8a8a8" stroke-width="0.5" stroke-dasharray="0.7 1.1"/>
<path d="M636.4,253.62 H641" fill="none" stroke="#a8a8a8" stroke-width="0.5" stroke-dasharray="0.7 1.1"/>
<path d="M636.4,263.00 H641" fill="none" stroke="#a8a8a8" stroke-width="0.5" stroke-dasharray="0.7 1.1"/>
<path d="M636.4,272.38 H641" fill="none" stroke="#a8a8a8" stroke-width="0.5" stroke-dasharray="0.7 1.1"/>
<path d="M636.4,281.76 H641" fill="none" stroke="#a8a8a8" stroke-width="0.5" stroke-dasharray="0.7 1.1"/>
<path d="M636.4,291.14 H641" fill="none" stroke="#a8a8a8" stroke-width="0.5" stroke-dasharray="0.7 1.1"/>
<path d="M636.4,300.52 H641" fill="none" stroke="#a8a8a8" stroke-width="0.5" stroke-dasharray="0.7 1.1"/>
<path d="M636.4,309.90 H641" fill="none" stroke="#a8a8a8" stroke-width="0.5" stroke-dasharray="0.7 1.1"/>
<path d="M636.4,319.28 H641" fill="none" stroke="#a8a8a8" stroke-width="0.5" stroke-dasharray="0.7 1.1"/>
<path d="M636.4,384.94 H641" fill="none" stroke="#a8a8a8" stroke-width="0.5" stroke-dasharray="0.7 1.1"/>
<rect x="217.6" y="384.8" width="5.6" height="4.4" rx="0" fill="#fafafa" stroke="#444" stroke-width="0.7" />
<path d="M217.6,384.8 L223.2,389.2 M223.2,384.8 L217.6,389.2" fill="none" stroke="#444" stroke-width="0.5" />
<path d="M229.6,385.6 L231.4,384 H235.4 V388.4 L233.6,390 H229.6 Z M229.6,385.6 H233.6 V390 M233.6,385.6 L235.4,384" fill="#f4f4f4" stroke="#666" stroke-width="0.6" />
<circle cx="243.4" cy="386.4" r="1.9" fill="#f7a51e" stroke="none" stroke-width="0.6" />
<path d="M243.4,383.2 V384 M240.2,386.4 H241 M241.2,384.2 L241.8,384.8 M245.6,384.2 L245,384.8" fill="none" stroke="#f7a51e" stroke-width="0.6" />
<circle cx="246.2" cy="388.6" r="1.4" fill="#1e88d8" stroke="none" stroke-width="0.6" />
<path d="M253.4,389 Q252.8,384 255.8,384 Q258.8,384 258.2,389 Z M252.6,390 H259" fill="#f4f4f4" stroke="#888" stroke-width="0.6" />
<path d="M265.4,389.6 V385.6 H270 V389.6 M264.4,388 H271" fill="none" stroke="#444" stroke-width="0.7" />
<path d="M269,383.6 L271,385.4" fill="none" stroke="#1e88d8" stroke-width="0.9" />
<circle cx="265.6" cy="389.4" r="0.9" fill="#666" stroke="none" stroke-width="0.6" />
<path d="M278.0,389.6 V385.6 H282.6 V389.6 M277.0,388 H283.6" fill="none" stroke="#444" stroke-width="0.7" />
<path d="M281.6,383.6 L283.6,385.4" fill="none" stroke="#1e88d8" stroke-width="0.9" />
<circle cx="278.20000000000005" cy="389.4" r="0.9" fill="#666" stroke="none" stroke-width="0.6" />
<path d="M289.6,388.4 Q291.8,384.4 294.2,388.4 M290.2,386.4 L293.8,386.8" fill="none" stroke="#777" stroke-width="0.7" />
<circle cx="304.4" cy="385.8" r="1.7" fill="#2aa0d8" stroke="none" stroke-width="0.6" />
<path d="M304.4,387.4 V390" fill="none" stroke="#2aa0d8" stroke-width="1" />
<rect x="313.6" y="384.2" width="4" height="4" rx="0" fill="#f6f6f6" stroke="#777" stroke-width="0.6" />
<rect x="315.6" y="386.2" width="4" height="4" rx="0" fill="#f6f6f6" stroke="#777" stroke-width="0.6" />
<rect x="326" y="384.4" width="4.6" height="5.4" rx="0" fill="#f6f6f6" stroke="#888" stroke-width="0.6" />
<circle cx="331.2" cy="384.8" r="1.2" fill="#f0a020" stroke="none" stroke-width="0.6" />
<circle cx="332.4" cy="386.6" r="1.6" fill="#f4f4f4" stroke="#999" stroke-width="0.6" />
<path d="M331,388.6 L330.4,390.2" fill="none" stroke="#999" stroke-width="0.6" />
<path d="M338.4,385 H345.6 M339.4,383.8 V389.4 M344.6,383.8 V389.4" fill="none" stroke="#444" stroke-width="0.7" />
<circle cx="344.4" cy="388.6" r="1.2" fill="#2aa0d8" stroke="none" stroke-width="0.6" />
<circle cx="267.4" cy="397.0" r="1.9" fill="#2e9bd6" stroke="none" stroke-width="0.6" />
<circle cx="269.6" cy="398.0" r="1.7" fill="#e8a020" stroke="none" stroke-width="0.6" />
<circle cx="267.8" cy="399.40000000000003" r="1.7" fill="#2eaa58" stroke="none" stroke-width="0.6" />
<path d="M378,399.6 L381,394.6 M378.6,398.0 H381.4" fill="none" stroke="#aaa" stroke-width="0.6" />
<circle cx="381" cy="395.20000000000005" r="1.1" fill="none" stroke="#aaa" stroke-width="0.5" />
<text x="384" y="399.40000000000003" font-size="4.6" fill="#888">:0</text>
<path d="M362.4,397.0 L363.6,398.40000000000003 L364.8,397.0" fill="none" stroke="#888" stroke-width="0.6" />
<rect x="401.6" y="394.6" width="6.4" height="6" rx="0" fill="#f0f0f0" stroke="#555" stroke-width="0.6" />
<rect x="401.6" y="394.6" width="6.4" height="1.6" rx="0" fill="#666" stroke="none" stroke-width="0.6" />
<path d="M401.6,398.0 H408 M404.8,396.20000000000005 V400.6" fill="none" stroke="#777" stroke-width="0.4" />
<rect x="414.4" y="394.6" width="5.6" height="4.4" rx="0" fill="#f4f4f4" stroke="#999" stroke-width="0.6" />
<path d="M413.6,400.40000000000003 H420.6 M417.2,399.0 V400.40000000000003" fill="none" stroke="#999" stroke-width="0.6" />
<path d="M516.4,397.0 L517.6,398.40000000000003 L518.8,397.0" fill="none" stroke="#666" stroke-width="0.6" />
<rect x="523.6" y="395.20000000000005" width="4.6" height="4.6" rx="0" fill="#3a3a3a" stroke="#222" stroke-width="0.4" />
<path d="M524.6,397.6 L525.6,398.8 L527.4,396.20000000000005" fill="none" stroke="#fff" stroke-width="0.7" />
<path d="M632.6,395.0 Q634.6,393.8 635.4,395.20000000000005 M636.6,394.8 Q638.4,394.0 638.8,395.6" fill="none" stroke="#f08020" stroke-width="0.8" />
<path d="M635.4,395.6 V400.20000000000005 L636.6,399.20000000000005 L637.4,401.0 L638.1999999999999,400.6 L637.4,399.0 H638.8 Z" fill="#fff" stroke="#555" stroke-width="0.5" />
<path d="M645,400.20000000000005 V396.20000000000005 L648,394.6 V399.0 Z" fill="#2a7fd8" stroke="none" stroke-width="0" />
<path d="M648.6,394.20000000000005 L650.6,396.20000000000005 M650.6,394.20000000000005 L648.6,396.20000000000005" fill="none" stroke="#e02020" stroke-width="0.8" />
<path d="M647.6,396.0 V400.6 L648.8000000000001,399.6 L649.6,401.4 L650.4,401.0 L649.6,399.4 H651.0 Z" fill="#fff" stroke="#555" stroke-width="0.5" />
<path d="M657,394.6 V399.20000000000005 L658.2,398.20000000000005 L659,400.0 L659.8,399.6 L659,398.0 H660.4 Z" fill="#fff" stroke="#555" stroke-width="0.5" />
<path d="M659.6,396.0 V400.6 L660.8000000000001,399.6 L661.6,401.4 L662.4,401.0 L661.6,399.4 H663.0 Z" fill="#fff" stroke="#555" stroke-width="0.5" />
<path d="M668.6,400.20000000000005 V396.20000000000005 L671.8,394.6 V399.0 Z" fill="#2a7fd8" stroke="none" stroke-width="0" />
<path d="M672.4,394.20000000000005 L674.4,396.20000000000005 M674.4,394.20000000000005 L672.4,396.20000000000005" fill="none" stroke="#e02020" stroke-width="0.8" />
<path d="M671.4,396.0 V400.6 L672.6,399.6 L673.4,401.4 L674.1999999999999,401.0 L673.4,399.4 H674.8 Z" fill="#fff" stroke="#555" stroke-width="0.5" />
<path d="M680.6,396.0 H684.6 M682.6,394.0 V398.0" fill="none" stroke="#444" stroke-width="0.7" />
<path d="M684,395.6 V400.20000000000005 L685.2,399.20000000000005 L686,401.0 L686.8,400.6 L686,399.0 H687.4 Z" fill="#fff" stroke="#555" stroke-width="0.5" />
<circle cx="695.6" cy="397.6" r="2.6" fill="none" stroke="#aaa" stroke-width="0.6" stroke-dasharray="0.8 0.8"/>
<path d="M703.6,394.6 H710.4 L707.8,397.6 V400.6 L706.2,399.8 V397.6 Z" fill="#f4f4f4" stroke="#666" stroke-width="0.6" />
<text x="711.2" y="400.0" font-size="4.6" fill="#444">:0</text>
<path d="M626.2,389.4 L627.4,388.2 M626.2,388 L627.4,386.8" fill="none" stroke="#bbb" stroke-width="0.5" />
<defs><linearGradient id="tb" x1="0" x2="1" y1="0" y2="0"><stop offset="0" stop-color="#172a3c"/><stop offset="0.3" stop-color="#14323b"/><stop offset="0.6" stop-color="#182f45"/><stop offset="1" stop-color="#1c2c4a"/></linearGradient></defs>
<rect x="0" y="404.2" width="750" height="17.8" rx="0" fill="url(#tb)" stroke="none" stroke-width="0.6" />
<rect x="6.8" y="409.4" width="3.7" height="3.7" rx="0" fill="#fff" stroke="none" stroke-width="0.6" />
<rect x="11" y="409.4" width="3.7" height="3.7" rx="0" fill="#fff" stroke="none" stroke-width="0.6" />
<rect x="6.8" y="413.6" width="3.7" height="3.7" rx="0" fill="#fff" stroke="none" stroke-width="0.6" />
<rect x="11" y="413.6" width="3.7" height="3.7" rx="0" fill="#fff" stroke="none" stroke-width="0.6" />
<rect x="30.2" y="410.6" width="1.4" height="5.4" rx="0" fill="#e8e8e8" stroke="none" stroke-width="0.6" />
<rect x="32.4" y="409.6" width="4" height="7.4" rx="0" fill="none" stroke="#e8e8e8" stroke-width="0.8" />
<rect x="37.2" y="410.6" width="1.4" height="5.4" rx="0" fill="#e8e8e8" stroke="none" stroke-width="0.6" />
<path d="M32.4,411.4 H36.4" fill="none" stroke="#e8e8e8" stroke-width="0.6" />
<path d="M52.4,408.4 H56.6 L57.8,409.8 H63.6 V418.4 H52.4 Z" fill="#f2c94c" stroke="none" stroke-width="0" />
<rect x="52.4" y="411.6" width="11.2" height="6.8" rx="0" fill="#fbdc6c" stroke="none" stroke-width="0.6" />
<rect x="55.4" y="414.6" width="5.2" height="3.8" rx="0" fill="#3c8ed8" stroke="none" stroke-width="0.6" />
<rect x="56.6" y="416" width="2.8" height="2.4" rx="0" fill="#fbdc6c" stroke="none" stroke-width="0.6" />
<ellipse cx="80" cy="413.4" rx="4.5" ry="5" fill="none" stroke="#ea2630" stroke-width="2.3"/>
<circle cx="103.5" cy="413.4" r="5.5" fill="#e33b2e" stroke="none" stroke-width="0.6" />
<path d="M103.5,413.4 L98.4,411.4 A5.5,5.5 0 0 0 101.4,418.5 Z" fill="#2da94f" stroke="none" stroke-width="0" />
<path d="M103.5,413.4 L101.4,418.5 A5.5,5.5 0 0 0 108.6,411.4 Z" fill="#f9c12e" stroke="none" stroke-width="0" />
<path d="M98.2,411.6 A5.5,5.5 0 0 1 108.8,411.6 L103.5,413.4 Z" fill="#e33b2e" stroke="none" stroke-width="0" />
<circle cx="103.5" cy="413.4" r="2.5" fill="#fff" stroke="none" stroke-width="0.6" />
<circle cx="103.5" cy="413.4" r="1.9" fill="#3b7ded" stroke="none" stroke-width="0.6" />
<rect x="120.8" y="408.2" width="10.8" height="10.6" rx="1.4" fill="#27a3e2" stroke="none" stroke-width="0" />
<circle cx="126.2" cy="413.6" r="3.7" fill="#27a3e2" stroke="#fff" stroke-width="1.4" />
<circle cx="126.2" cy="413.6" r="1.5" fill="#fff" stroke="none" stroke-width="0.6" />
<circle cx="128.4" cy="416" r="1.6" fill="#9fd8f5" stroke="none" stroke-width="0.6" />
<rect x="138.6" y="404.2" width="22.2" height="17.8" rx="0" fill="#40566a" stroke="none" stroke-width="0.6" />
<rect x="144" y="407.6" width="10.6" height="11.6" rx="1" fill="#1669d2" stroke="none" stroke-width="0" />
<circle cx="149.4" cy="411.6" r="1.7" fill="#fff" stroke="none" stroke-width="0.6" />
<path d="M146.4,417 Q146.4,413.8 149.4,413.8 Q152.4,413.8 152.4,417 Z" fill="#fff" stroke="none" stroke-width="0" />
<rect x="144" y="407.6" width="1.8" height="11.6" rx="0" fill="#0d47a1" stroke="none" stroke-width="0.6" />
<rect x="166.8" y="408.2" width="10.6" height="10.4" rx="1.2" fill="#0a1e36" stroke="#2fa3f7" stroke-width="0.8" />
<text x="172.1" y="415.6" font-size="5.6" font-weight="bold" fill="#31a8ff" text-anchor="middle">Ps</text>
<rect x="189.8" y="411.4" width="11.2" height="7.4" rx="0" fill="#e8e8e8" stroke="#555" stroke-width="0.4" />
<path d="M189.8,411.2 L200.6,408.2" fill="none" stroke="#f2f2f2" stroke-width="1.8" />
<path d="M192,413.4 H198.8 M192,415.2 H198.8 M192,417 H198.8" fill="none" stroke="#444" stroke-width="0.7" />
<circle cx="219.2" cy="413" r="5.4" fill="#2aa3e8" stroke="none" stroke-width="0.6" />
<path d="M216,413 L222.4,410.4 L221.2,416.2 L219,414.6 L218.2,416 L218,414 Z" fill="#fff" stroke="none" stroke-width="0" />
<rect x="221.4" y="414.6" width="5" height="4" rx="0" fill="#9a9a9a" stroke="#666" stroke-width="0.4" />
<rect x="49" y="421" width="17" height="1" rx="0" fill="#7fc2f2" stroke="none" stroke-width="0.6" />
<rect x="71" y="421" width="18" height="1" rx="0" fill="#7fc2f2" stroke="none" stroke-width="0.6" />
<rect x="138.6" y="421" width="22.200000000000017" height="1" rx="0" fill="#7fc2f2" stroke="none" stroke-width="0.6" />
<rect x="185.8" y="421" width="19.19999999999999" height="1" rx="0" fill="#7fc2f2" stroke="none" stroke-width="0.6" />
<rect x="208.8" y="421" width="19.19999999999999" height="1" rx="0" fill="#7fc2f2" stroke="none" stroke-width="0.6" />
<path d="M661.6,413.8 L664.2,411.2 L666.8,413.8" fill="none" stroke="#fff" stroke-width="0.8" />
<path d="M672,411.8 H673.4 L675.4,409.8 V415.8 L673.4,413.8 H672 Z" fill="#fff" stroke="none" stroke-width="0" />
<path d="M676.6,411 Q677.8,412.8 676.6,414.6 M678,410 Q679.8,412.8 678,415.6" fill="none" stroke="#fff" stroke-width="0.6" />
<rect x="683.6" y="409.8" width="6.6" height="4.6" rx="0" fill="none" stroke="#fff" stroke-width="0.8" />
<path d="M685.4,416.4 H688.4 M686.9,414.4 V416.4" fill="none" stroke="#fff" stroke-width="0.7" />
<rect x="682.6" y="412.6" width="2.6" height="3.6" rx="0" fill="#172f40" stroke="#fff" stroke-width="0.6" />
<path d="M730.6,408.8 H738.4 V414.6 H735.4 L734.6,416.2 L733.8,414.6 H730.6 Z" fill="none" stroke="#fff" stroke-width="0.9" />
</svg>
</div></body></html>
